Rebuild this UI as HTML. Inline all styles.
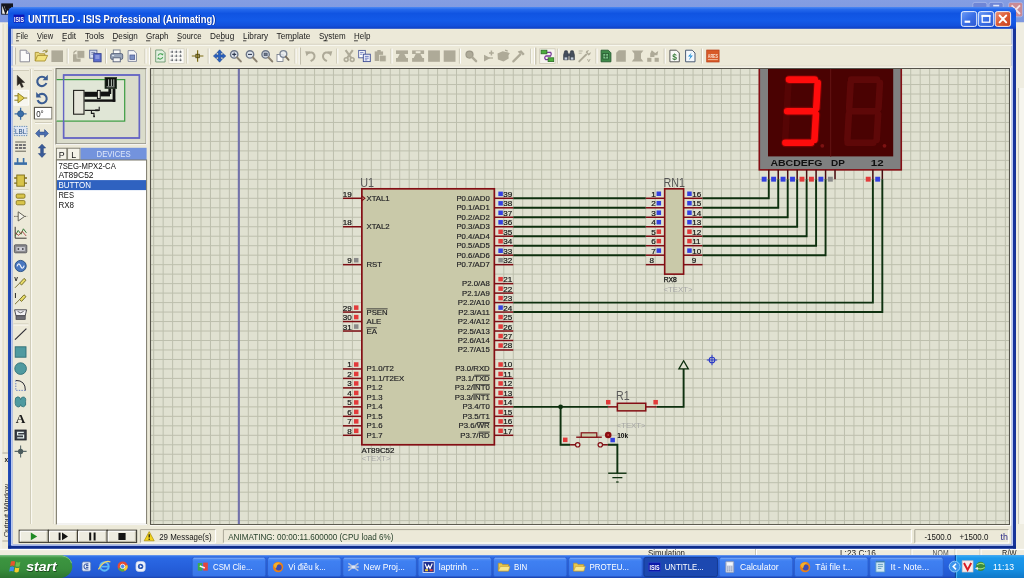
<!DOCTYPE html>
<html><head><meta charset="utf-8"><title>UNTITLED - ISIS Professional (Animating)</title>
<style>
html,body{margin:0;padding:0;background:#ece9d8;overflow:hidden;}
svg{display:block;font-family:"Liberation Sans",sans-serif;}
text{white-space:pre;}
</style></head><body>
<svg width="1024" height="578" viewBox="0 0 1024 578">
<defs>
<filter id="soft" filterUnits="userSpaceOnUse" x="-12" y="-12" width="1048" height="602" color-interpolation-filters="sRGB"><feGaussianBlur stdDeviation="0.42"/></filter>
<linearGradient id="gInact" x1="0" y1="0" x2="0" y2="1">
<stop offset="0" stop-color="#a3b7ec"/><stop offset="0.18" stop-color="#879fe3"/><stop offset="1" stop-color="#7c97df"/></linearGradient>
<linearGradient id="gTitle" x1="0" y1="0" x2="0" y2="1">
<stop offset="0" stop-color="#4f8af3"/><stop offset="0.12" stop-color="#2468ec"/><stop offset="0.30" stop-color="#1054e2"/>
<stop offset="0.62" stop-color="#135ae8"/><stop offset="0.86" stop-color="#1250dc"/><stop offset="1" stop-color="#0f3fc0"/></linearGradient>
<linearGradient id="gBtnB" x1="0" y1="0" x2="1" y2="1"><stop offset="0" stop-color="#6f9cf6"/><stop offset="0.5" stop-color="#3a6fe6"/><stop offset="1" stop-color="#2c58d2"/></linearGradient>
<linearGradient id="gBtnR" x1="0" y1="0" x2="1" y2="1"><stop offset="0" stop-color="#eb9378"/><stop offset="0.5" stop-color="#dc5a34"/><stop offset="1" stop-color="#c4401e"/></linearGradient>
<linearGradient id="gTask" x1="0" y1="0" x2="0" y2="1">
<stop offset="0" stop-color="#3f7ff0"/><stop offset="0.12" stop-color="#2a68e4"/><stop offset="0.5" stop-color="#2660dc"/><stop offset="0.9" stop-color="#2258d0"/><stop offset="1" stop-color="#1c46b4"/></linearGradient>
<linearGradient id="gStart" x1="0" y1="0" x2="0" y2="1">
<stop offset="0" stop-color="#5aa85a"/><stop offset="0.15" stop-color="#3c9440"/><stop offset="0.6" stop-color="#388e3c"/><stop offset="1" stop-color="#2c7430"/></linearGradient>
<linearGradient id="gTray" x1="0" y1="0" x2="0" y2="1">
<stop offset="0" stop-color="#3cb0f4"/><stop offset="0.12" stop-color="#1c98ec"/><stop offset="0.6" stop-color="#1690e4"/><stop offset="1" stop-color="#1078c8"/></linearGradient>
<linearGradient id="gTbtn" x1="0" y1="0" x2="0" y2="1">
<stop offset="0" stop-color="#5c96f6"/><stop offset="0.2" stop-color="#3f80f2"/><stop offset="1" stop-color="#3876ea"/></linearGradient>
</defs>
<g filter="url(#soft)">
<rect x="-12.00" y="-12.00" width="1048.00" height="602.00" fill="#ece9d8" />
<rect x="-12.00" y="-12.00" width="1048.00" height="34.50" fill="url(#gInact)" />
<rect x="-12.00" y="22.50" width="14.40" height="533.00" fill="#f1f0ea" />
<rect x="2.40" y="22.50" width="6.00" height="533.00" fill="#efecdc" />
<line x1="3.20" y1="24.00" x2="3.20" y2="452.00" stroke="#dcd8c4" stroke-width="0.8" />
<line x1="7.20" y1="24.00" x2="7.20" y2="452.00" stroke="#e2dfc6" stroke-width="1.2" />
<rect x="1.20" y="3.40" width="11.80" height="11.20" fill="#16161c" />
<path d="M2.2 6.2 L4.4 6.2 L6.4 12.4 L8.2 8.2 L9.6 12.4 L11.8 5.2 L12.4 13.8 L2.2 13.8 Z" fill="#f2f2ec"/>
<path d="M3 5.4 L5.6 12.8 L7.6 7.8 L9.2 12.6 L11.6 5" fill="none" stroke="#16161c" stroke-width="1.5"/>
<rect x="972.80" y="2.40" width="14.20" height="14.40" fill="#6f86d6" stroke="#a9b9ea" stroke-width="0.8" rx="2"/>
<rect x="989.00" y="2.40" width="14.20" height="14.40" fill="#6f86d6" stroke="#a9b9ea" stroke-width="0.8" rx="2"/>
<rect x="1008.60" y="2.40" width="14.00" height="14.40" fill="#c98a94" stroke="#a9b9ea" stroke-width="0.8" rx="2"/>
<path d="M1011.6 5.4 l8.4 8.6 M1020 5.4 l-8.4 8.6" stroke="#f1e2e6" stroke-width="1.9" fill="none"/>
<path d="M993.2 5.6 h6" stroke="#dfe6fa" stroke-width="1.6"/>
<rect x="1016.00" y="22.50" width="20.00" height="533.00" fill="#efede1" />
<line x1="1018.60" y1="88.00" x2="1018.60" y2="524.00" stroke="#c4c2b8" stroke-width="1.0" />
<rect x="1019.30" y="88.00" width="16.70" height="436.00" fill="#f6f5ee" />
<line x1="2.40" y1="453.00" x2="8.00" y2="453.00" stroke="#aca899" stroke-width="1" />
<text x="0.00" y="0.00" font-family='"Liberation Sans", sans-serif' font-size="7.2" fill="#2a2a2a" textLength="53.00" lengthAdjust="spacingAndGlyphs" transform="translate(8.6,537) rotate(-90)">Output Window</text>
<text x="4.60" y="462.40" font-family='"Liberation Sans", sans-serif' font-size="6.6" fill="#222" font-weight="bold" >x</text>
<line x1="2.40" y1="541.00" x2="8.00" y2="541.00" stroke="#aca899" stroke-width="1" />
<rect x="-12.00" y="548.50" width="1048.00" height="7.00" fill="#efecdd" />
<rect x="-12.00" y="548.80" width="1048.00" height="1.30" fill="#fdfdfa" />
<line x1="755.50" y1="549.00" x2="755.50" y2="555.00" stroke="#c9c5b2" stroke-width="1" />
<line x1="756.50" y1="549.00" x2="756.50" y2="555.00" stroke="#ffffff" stroke-width="1" />
<line x1="911.00" y1="549.00" x2="911.00" y2="555.00" stroke="#c9c5b2" stroke-width="1" />
<line x1="912.00" y1="549.00" x2="912.00" y2="555.00" stroke="#ffffff" stroke-width="1" />
<line x1="955.00" y1="549.00" x2="955.00" y2="555.00" stroke="#c9c5b2" stroke-width="1" />
<line x1="956.00" y1="549.00" x2="956.00" y2="555.00" stroke="#ffffff" stroke-width="1" />
<line x1="980.00" y1="549.00" x2="980.00" y2="555.00" stroke="#c9c5b2" stroke-width="1" />
<line x1="981.00" y1="549.00" x2="981.00" y2="555.00" stroke="#ffffff" stroke-width="1" />
<clipPath id="cpBack"><rect x="0" y="548.6" width="1024" height="6.6"/></clipPath>
<g clip-path="url(#cpBack)">
<text x="648.00" y="556.30" font-family='"Liberation Sans", sans-serif' font-size="8.6" fill="#222" textLength="37.00" lengthAdjust="spacingAndGlyphs" >Simulation</text>
<text x="840.00" y="556.30" font-family='"Liberation Sans", sans-serif' font-size="8.6" fill="#222" textLength="36.00" lengthAdjust="spacingAndGlyphs" >L:23 C:16</text>
<text x="932.60" y="556.30" font-family='"Liberation Sans", sans-serif' font-size="8.6" fill="#555" textLength="16.00" lengthAdjust="spacingAndGlyphs" >NOM</text>
<text x="1002.00" y="556.30" font-family='"Liberation Sans", sans-serif' font-size="8.6" fill="#222" textLength="14.50" lengthAdjust="spacingAndGlyphs" >R/W</text>
</g>
<path d="M8.2 548.6 V12.9 Q8.2 6.9 14.2 6.9 H1010 Q1016 6.9 1016 12.9 V548.6 Z" fill="#1a48d2"/>
<path d="M8.2 28.8 V12.9 Q8.2 6.9 14.2 6.9 H1010 Q1016 6.9 1016 12.9 V28.8 Z" fill="url(#gTitle)"/>
<rect x="8.20" y="28.80" width="3.00" height="519.80" fill="#1c46b0" />
<rect x="11.20" y="28.80" width="1.30" height="516.20" fill="#e2e8fb" />
<rect x="1013.00" y="28.80" width="3.00" height="519.80" fill="#18349a" />
<rect x="1011.70" y="28.80" width="1.30" height="516.20" fill="#b9c8f6" />
<rect x="8.20" y="545.70" width="1007.80" height="2.90" fill="#0e2c8c" />
<rect x="11.20" y="544.50" width="1001.80" height="1.20" fill="#dfe5fb" />
<rect x="12.50" y="28.80" width="999.20" height="515.70" fill="#ece9d8" />
<rect x="13.60" y="14.60" width="10.80" height="8.00" fill="#0c18b8" />
<text x="14.10" y="21.60" font-family='"Liberation Sans", sans-serif' font-size="7.2" fill="#ffffff" font-weight="bold" textLength="9.80" lengthAdjust="spacingAndGlyphs" >ISIS</text>
<text x="28.80" y="23.40" font-family='"Liberation Sans", sans-serif' font-size="10.6" fill="#0a2a90" font-weight="bold" textLength="187.40" lengthAdjust="spacingAndGlyphs" >UNTITLED - ISIS Professional (Animating)</text>
<text x="28.00" y="22.80" font-family='"Liberation Sans", sans-serif' font-size="10.6" fill="#ffffff" font-weight="bold" textLength="187.40" lengthAdjust="spacingAndGlyphs" >UNTITLED - ISIS Professional (Animating)</text>
<rect x="961.30" y="11.60" width="15.40" height="14.80" fill="url(#gBtnB)" stroke="#ffffff" stroke-width="0.9" rx="2.2"/>
<rect x="978.30" y="11.60" width="15.40" height="14.80" fill="url(#gBtnB)" stroke="#ffffff" stroke-width="0.9" rx="2.2"/>
<rect x="995.20" y="11.60" width="15.40" height="14.80" fill="url(#gBtnR)" stroke="#ffffff" stroke-width="0.9" rx="2.2"/>
<path d="M964.6 21.7 h5.6" stroke="#fff" stroke-width="2.2" fill="none"/>
<rect x="982.2" y="15.6" width="7.6" height="6.6" fill="none" stroke="#fff" stroke-width="1.3"/><path d="M981.6 15.9 h8.8" stroke="#fff" stroke-width="2"/>
<path d="M999.6 15.5 l6.6 6.8 M1006.2 15.5 l-6.6 6.8" stroke="#fff" stroke-width="1.9" fill="none" stroke-linecap="round"/>
<text x="16.00" y="39.30" font-family='"Liberation Sans", sans-serif' font-size="8.4" fill="#1a1a1a" textLength="12.20" lengthAdjust="spacingAndGlyphs" >File</text>
<text x="37.00" y="39.30" font-family='"Liberation Sans", sans-serif' font-size="8.4" fill="#1a1a1a" textLength="16.20" lengthAdjust="spacingAndGlyphs" >View</text>
<text x="62.00" y="39.30" font-family='"Liberation Sans", sans-serif' font-size="8.4" fill="#1a1a1a" textLength="14.00" lengthAdjust="spacingAndGlyphs" >Edit</text>
<text x="85.00" y="39.30" font-family='"Liberation Sans", sans-serif' font-size="8.4" fill="#1a1a1a" textLength="19.20" lengthAdjust="spacingAndGlyphs" >Tools</text>
<text x="112.50" y="39.30" font-family='"Liberation Sans", sans-serif' font-size="8.4" fill="#1a1a1a" textLength="25.30" lengthAdjust="spacingAndGlyphs" >Design</text>
<text x="146.00" y="39.30" font-family='"Liberation Sans", sans-serif' font-size="8.4" fill="#1a1a1a" textLength="22.60" lengthAdjust="spacingAndGlyphs" >Graph</text>
<text x="177.00" y="39.30" font-family='"Liberation Sans", sans-serif' font-size="8.4" fill="#1a1a1a" textLength="24.60" lengthAdjust="spacingAndGlyphs" >Source</text>
<text x="210.00" y="39.30" font-family='"Liberation Sans", sans-serif' font-size="8.4" fill="#1a1a1a" textLength="24.20" lengthAdjust="spacingAndGlyphs" >Debug</text>
<text x="243.00" y="39.30" font-family='"Liberation Sans", sans-serif' font-size="8.4" fill="#1a1a1a" textLength="25.00" lengthAdjust="spacingAndGlyphs" >Library</text>
<text x="276.50" y="39.30" font-family='"Liberation Sans", sans-serif' font-size="8.4" fill="#1a1a1a" textLength="33.90" lengthAdjust="spacingAndGlyphs" >Template</text>
<text x="319.00" y="39.30" font-family='"Liberation Sans", sans-serif' font-size="8.4" fill="#1a1a1a" textLength="26.60" lengthAdjust="spacingAndGlyphs" >System</text>
<text x="354.00" y="39.30" font-family='"Liberation Sans", sans-serif' font-size="8.4" fill="#1a1a1a" textLength="16.40" lengthAdjust="spacingAndGlyphs" >Help</text>
<line x1="16.00" y1="40.80" x2="18.90" y2="40.80" stroke="#1a1a1a" stroke-width="0.8" />
<line x1="37.00" y1="40.80" x2="40.85" y2="40.80" stroke="#1a1a1a" stroke-width="0.8" />
<line x1="62.00" y1="40.80" x2="65.33" y2="40.80" stroke="#1a1a1a" stroke-width="0.8" />
<line x1="85.00" y1="40.80" x2="88.65" y2="40.80" stroke="#1a1a1a" stroke-width="0.8" />
<line x1="112.50" y1="40.80" x2="116.51" y2="40.80" stroke="#1a1a1a" stroke-width="0.8" />
<line x1="146.00" y1="40.80" x2="150.29" y2="40.80" stroke="#1a1a1a" stroke-width="0.8" />
<line x1="177.00" y1="40.80" x2="180.90" y2="40.80" stroke="#1a1a1a" stroke-width="0.8" />
<line x1="219.68" y1="40.80" x2="224.28" y2="40.80" stroke="#1a1a1a" stroke-width="0.8" />
<line x1="243.00" y1="40.80" x2="246.39" y2="40.80" stroke="#1a1a1a" stroke-width="0.8" />
<line x1="289.21" y1="40.80" x2="293.24" y2="40.80" stroke="#1a1a1a" stroke-width="0.8" />
<line x1="323.43" y1="40.80" x2="327.64" y2="40.80" stroke="#1a1a1a" stroke-width="0.8" />
<line x1="354.00" y1="40.80" x2="357.89" y2="40.80" stroke="#1a1a1a" stroke-width="0.8" />
<line x1="11.20" y1="44.30" x2="1012.20" y2="44.30" stroke="#d2cebc" stroke-width="1" />
<line x1="11.20" y1="45.30" x2="1012.20" y2="45.30" stroke="#fbfaf4" stroke-width="1" />
<line x1="11.20" y1="66.20" x2="1012.20" y2="66.20" stroke="#d8d4c2" stroke-width="1" />
<line x1="11.20" y1="67.00" x2="1012.20" y2="67.00" stroke="#f8f7f0" stroke-width="1" />
<line x1="14.20" y1="47.60" x2="14.20" y2="64.60" stroke="#ffffff" stroke-width="1" />
<line x1="15.40" y1="47.60" x2="15.40" y2="64.60" stroke="#bcb8a6" stroke-width="1" />
<g transform="translate(24.70,56.00)">
<path d="M-4.6 -5.8 H1.6 L4.8 -2.6 V5.8 H-4.6 Z" fill="#fbfbfb" stroke="#8c8c98" stroke-width="1"/>
<path d="M1.6 -5.8 V-2.6 H4.8" fill="#dcdce4" stroke="#8c8c98" stroke-width="0.8"/>
</g>
<g transform="translate(41.20,56.00)">
<path d="M-6 5 V-3.6 H-2.6 L-1.4 -2.2 H3.6 V0" fill="#e8d87a" stroke="#a89030" stroke-width="0.9"/>
<path d="M-6 5 L-3.6 -0.6 H6.4 L3.8 5 Z" fill="#f2e27c" stroke="#a89030" stroke-width="0.9"/>
<path d="M1.4 -4.6 Q3.6 -6.6 5.6 -4.4 M5.8 -6.4 V-4 H3.6" fill="none" stroke="#8a7a20" stroke-width="0.9"/>
</g>
<rect x="51.40" y="50.40" width="11.60" height="11.60" fill="#aeaa98" />
<line x1="67.20" y1="48.60" x2="67.20" y2="63.60" stroke="#c9c5b2" stroke-width="1" />
<line x1="68.20" y1="48.60" x2="68.20" y2="63.60" stroke="#ffffff" stroke-width="1" />
<g transform="translate(78.80,56.00)">
<rect x="-5.8" y="-1.8" width="7.6" height="7.6" fill="#aeaa98"/><rect x="-1.8" y="-5.6" width="7.8" height="7.8" fill="#aeaa98" stroke="#ece9d8" stroke-width="0.7"/>
<path d="M-5.2 -2.4 Q-4.6 -5.2 -2.2 -5.2" fill="none" stroke="#aeaa98" stroke-width="1.2"/>
</g>
<g transform="translate(95.30,56.00)">
<rect x="-5.6" y="-5.8" width="7.2" height="8" fill="#dfe3f2" stroke="#5a6a9a" stroke-width="0.9"/>
<rect x="-1.6" y="-2.4" width="7.4" height="8.2" fill="#5a6ccc" stroke="#3a4690" stroke-width="0.9"/>
<path d="M-4 -3.6 h4 M-4 -1.8 h2" stroke="#5a6a9a" stroke-width="0.8"/><path d="M0 0 h4.2 M0 2 h4.2" stroke="#c8d0f4" stroke-width="0.9"/>
</g>
<line x1="105.60" y1="48.60" x2="105.60" y2="63.60" stroke="#c9c5b2" stroke-width="1" />
<line x1="106.60" y1="48.60" x2="106.60" y2="63.60" stroke="#ffffff" stroke-width="1" />
<g transform="translate(116.70,56.00)">
<rect x="-3.4" y="-6" width="6.8" height="4.4" fill="#fafafa" stroke="#6a7486" stroke-width="0.9"/>
<rect x="-6" y="-2.4" width="12" height="5.8" rx="1.4" fill="#9aa6ba" stroke="#56607a" stroke-width="0.9"/>
<rect x="-3.6" y="1.8" width="7.2" height="4" fill="#f4f4f4" stroke="#56607a" stroke-width="0.9"/>
<path d="M-4.6 -0.4 h2" stroke="#e8eef8" stroke-width="1"/>
</g>
<g transform="translate(132.30,56.00)">
<path d="M-4.2 -5.4 H1.6 L4.2 -2.8 V5.4 H-4.2 Z" fill="#f6f6f8" stroke="#7a8298" stroke-width="0.9"/>
<rect x="-2.4" y="-1" width="4.8" height="4.4" fill="#7c90c4" stroke="#46548a" stroke-width="0.7"/>
</g>
<line x1="145.00" y1="48.60" x2="145.00" y2="63.60" stroke="#c9c5b2" stroke-width="1" />
<line x1="146.00" y1="48.60" x2="146.00" y2="63.60" stroke="#ffffff" stroke-width="1" />
<line x1="149.40" y1="47.60" x2="149.40" y2="64.60" stroke="#ffffff" stroke-width="1" />
<line x1="150.60" y1="47.60" x2="150.60" y2="64.60" stroke="#bcb8a6" stroke-width="1" />
<g transform="translate(160.30,56.00)">
<path d="M-4.6 -6 H2 L4.8 -3.2 V6 H-4.6 Z" fill="#e2efe0" stroke="#6b966f" stroke-width="0.9"/>
<path d="M-2.2 -0.4 A2.6 2.6 0 0 1 2.4 -1.2 M2.4 1.2 A2.6 2.6 0 0 1 -2.2 2" fill="none" stroke="#46a352" stroke-width="1.1"/>
<path d="M3.2 -2.8 L2.6 -0.6 L0.8 -1.6 Z M-3 3.6 L-2.4 1.2 L-0.6 2.2 Z" fill="#46a352"/>
</g>
<rect x="168.90" y="48.80" width="15.20" height="14.60" fill="#fbfaf6" stroke="#d6d2c2" stroke-width="0.8" />
<rect x="171.45" y="51.25" width="1.5" height="1.5" fill="#343840"/>
<rect x="171.45" y="55.35" width="1.5" height="1.5" fill="#343840"/>
<rect x="171.45" y="59.45" width="1.5" height="1.5" fill="#343840"/>
<rect x="175.60" y="51.25" width="1.5" height="1.5" fill="#343840"/>
<rect x="175.60" y="55.35" width="1.5" height="1.5" fill="#343840"/>
<rect x="175.60" y="59.45" width="1.5" height="1.5" fill="#343840"/>
<rect x="179.75" y="51.25" width="1.5" height="1.5" fill="#343840"/>
<rect x="179.75" y="55.35" width="1.5" height="1.5" fill="#343840"/>
<rect x="179.75" y="59.45" width="1.5" height="1.5" fill="#343840"/>
<path d="M172.20 49.80 v12.6 M176.35 49.80 v12.6 M180.50 49.80 v12.6 M170.10 52.00 h12.6 M170.10 56.10 h12.6 M170.10 60.20 h12.6" stroke="#8a8e96" stroke-width="0.6" stroke-dasharray="1 1.1" fill="none"/>
<line x1="186.80" y1="48.60" x2="186.80" y2="63.60" stroke="#c9c5b2" stroke-width="1" />
<line x1="187.80" y1="48.60" x2="187.80" y2="63.60" stroke="#ffffff" stroke-width="1" />
<g transform="translate(197.60,56.00)">
<path d="M-5.8 0 H5.8 M0 -5.8 V5.8" stroke="#7a6a10" stroke-width="1.15"/><rect x="-1.7" y="-1.7" width="3.4" height="3.4" fill="none" stroke="#4c4408" stroke-width="0.9"/>
</g>
<line x1="208.20" y1="48.60" x2="208.20" y2="63.60" stroke="#c9c5b2" stroke-width="1" />
<line x1="209.20" y1="48.60" x2="209.20" y2="63.60" stroke="#ffffff" stroke-width="1" />
<g transform="translate(219.60,56.00)">
<path d="M0 -6.2 L2.6 -3.2 H1.1 V-1.1 H3.2 V-2.6 L6.2 0 L3.2 2.6 V1.1 H1.1 V3.2 H2.6 L0 6.2 L-2.6 3.2 H-1.1 V1.1 H-3.2 V2.6 L-6.2 0 L-3.2 -2.6 V-1.1 H-1.1 V-3.2 H-2.6 Z" fill="#2a62c0" stroke="#173f8c" stroke-width="0.6"/>
</g>
<g transform="translate(235.40,56.00)">
<circle cx="-1.2" cy="-1.6" r="3.7" fill="#dfe5ee" stroke="#6c7688" stroke-width="1.4"/>
<path d="M1.6 1.4 L5.4 5.4" stroke="#8a8070" stroke-width="2.1" stroke-linecap="round"/>
<path d="M-3.2 -1.6 h4 M-1.2 -3.6 v4" stroke="#303a50" stroke-width="1.1"/>
</g>
<g transform="translate(251.20,56.00)">
<circle cx="-1.2" cy="-1.6" r="3.7" fill="#dfe5ee" stroke="#6c7688" stroke-width="1.4"/>
<path d="M1.6 1.4 L5.4 5.4" stroke="#8a8070" stroke-width="2.1" stroke-linecap="round"/>
<path d="M-3.2 -1.6 h4" stroke="#303a50" stroke-width="1.1"/>
</g>
<g transform="translate(266.80,56.00)">
<circle cx="-1.2" cy="-1.6" r="3.7" fill="#dfe5ee" stroke="#6c7688" stroke-width="1.4"/>
<path d="M1.6 1.4 L5.4 5.4" stroke="#8a8070" stroke-width="2.1" stroke-linecap="round"/>
<rect x="-2.8" y="-3" width="3.2" height="2.8" fill="#6a7488" stroke="#404a5c" stroke-width="0.6"/>
</g>
<g transform="translate(282.80,56.00)">
<rect x="-5.8" y="-1.6" width="6" height="7" fill="#fcfcfc" stroke="#707888" stroke-width="0.8"/>
<circle cx="0.6" cy="-2" r="3.4" fill="#e8ecf2" fill-opacity="0.8" stroke="#7a8494" stroke-width="1.3"/>
<path d="M3 0.6 L5.8 3.8" stroke="#7a7060" stroke-width="1.8" stroke-linecap="round"/>
</g>
<line x1="295.00" y1="48.60" x2="295.00" y2="63.60" stroke="#c9c5b2" stroke-width="1" />
<line x1="296.00" y1="48.60" x2="296.00" y2="63.60" stroke="#ffffff" stroke-width="1" />
<line x1="299.20" y1="47.60" x2="299.20" y2="64.60" stroke="#ffffff" stroke-width="1" />
<line x1="300.40" y1="47.60" x2="300.40" y2="64.60" stroke="#bcb8a6" stroke-width="1" />
<g transform="translate(311.00,56.00) scale(1,1)">
<path d="M-3.8 -2.6 Q1.8 -5.2 3.4 -0.8 Q4.2 2.8 -0.4 5.2" fill="none" stroke="#aeaa98" stroke-width="2"/>
<path d="M-5.8 -4.8 L-0.8 -4.4 L-4.4 0.2 Z" fill="#aeaa98"/>
</g>
<g transform="translate(326.50,56.00) scale(-1,1)">
<path d="M-3.8 -2.6 Q1.8 -5.2 3.4 -0.8 Q4.2 2.8 -0.4 5.2" fill="none" stroke="#aeaa98" stroke-width="2"/>
<path d="M-5.8 -4.8 L-0.8 -4.4 L-4.4 0.2 Z" fill="#aeaa98"/>
</g>
<line x1="336.80" y1="48.60" x2="336.80" y2="63.60" stroke="#c9c5b2" stroke-width="1" />
<line x1="337.80" y1="48.60" x2="337.80" y2="63.60" stroke="#ffffff" stroke-width="1" />
<g transform="translate(349.20,56.00)">
<path d="M-3.6 -5.8 L2.2 2.2 M3.6 -5.8 L-2.2 2.2" stroke="#aeaa98" stroke-width="2.1" fill="none"/>
<circle cx="-3" cy="3.6" r="1.9" fill="none" stroke="#aeaa98" stroke-width="1.6"/><circle cx="3" cy="3.6" r="1.9" fill="none" stroke="#aeaa98" stroke-width="1.6"/>
</g>
<g transform="translate(364.70,56.00)">
<rect x="-6" y="-5.6" width="6.6" height="7.4" fill="#fdfdfd" stroke="#4a5a9a" stroke-width="0.9"/>
<rect x="-1.4" y="-1.8" width="7" height="7.4" fill="#eef0fa" stroke="#3c4c94" stroke-width="0.9"/>
<path d="M-4.6 -3.6 h3.4 M-4.6 -1.8 h2.2 M0.2 0.4 h3.8 M0.2 2.2 h3.8 M0.2 3.9 h2.4" stroke="#5466b4" stroke-width="0.8"/>
</g>
<g transform="translate(380.30,56.00)">
<rect x="-5.6" y="-4.6" width="8.4" height="9.6" fill="#aeaa98"/><rect x="-3" y="-6" width="3.4" height="2" fill="#aeaa98"/>
<rect x="-0.8" y="-0.8" width="6.6" height="6.6" fill="#aeaa98" stroke="#ece9d8" stroke-width="0.7"/>
</g>
<line x1="391.00" y1="48.60" x2="391.00" y2="63.60" stroke="#c9c5b2" stroke-width="1" />
<line x1="392.00" y1="48.60" x2="392.00" y2="63.60" stroke="#ffffff" stroke-width="1" />
<g transform="translate(402.00,56.00)">
<rect x="-6" y="-5.6" width="12" height="3.6" fill="#aeaa98"/><rect x="-6" y="2" width="12" height="3.8" fill="#aeaa98"/><path d="M-2.4 -2 H2.4 L4.4 2 H-4.4 Z" fill="#aeaa98"/>
</g>
<g transform="translate(418.10,56.00)">
<rect x="-6" y="-5.6" width="12" height="3.6" fill="#aeaa98"/><rect x="-6" y="2" width="12" height="3.8" fill="#aeaa98"/><path d="M-2.4 -2 H2.4 L4.4 2 H-4.4 Z" fill="#aeaa98"/>
<rect x="-2.4" y="-4.8" width="4.8" height="2" fill="#ece9d8"/>
</g>
<g transform="translate(434.00,56.00)">
<rect x="-5.9" y="-5.6" width="11.8" height="11.4" fill="#aeaa98"/>
</g>
<g transform="translate(449.60,56.00)">
<rect x="-5.9" y="-5.6" width="11.8" height="11.4" fill="#aeaa98"/>
</g>
<line x1="459.40" y1="48.60" x2="459.40" y2="63.60" stroke="#c9c5b2" stroke-width="1" />
<line x1="460.40" y1="48.60" x2="460.40" y2="63.60" stroke="#ffffff" stroke-width="1" />
<g transform="translate(470.90,56.00)">
<circle cx="-1.4" cy="-1.4" r="3.5" fill="#aeaa98" stroke="#9c9888" stroke-width="1.2"/><path d="M1.4 1.4 L5.2 5.2" stroke="#aeaa98" stroke-width="2.4" stroke-linecap="round"/>
</g>
<g transform="translate(489.00,56.00)">
<path d="M-5 -1.2 L1.4 2 L-5 5.6 Z" fill="#aeaa98"/><path d="M0 2 h4" stroke="#aeaa98" stroke-width="1.2"/><path d="M2.4 -5.6 v5 M0 -3.1 h4.8" stroke="#aeaa98" stroke-width="1.5"/>
</g>
<g transform="translate(503.10,56.00)">
<path d="M-5.6 -2.4 L-0.4 -4.8 L5.2 -3.4 L5.6 2.6 L0.4 5.4 L-5.2 3.6 Z" fill="#aeaa98"/><path d="M2 -5.8 l2.6 1 M4.4 -1 l1.8 -2" stroke="#aeaa98" stroke-width="1.4"/>
</g>
<g transform="translate(518.70,56.00)">
<path d="M-5.4 5.4 L1.6 -1.6" stroke="#aeaa98" stroke-width="2.2" stroke-linecap="round"/><path d="M-1 -4.6 L2.6 -5.8 L6 -2 L4.2 -0.4 L2.4 -2.6 L0.6 -2.4 Z" fill="#aeaa98"/>
</g>
<line x1="530.80" y1="48.60" x2="530.80" y2="63.60" stroke="#c9c5b2" stroke-width="1" />
<line x1="531.80" y1="48.60" x2="531.80" y2="63.60" stroke="#ffffff" stroke-width="1" />
<line x1="534.60" y1="47.60" x2="534.60" y2="64.60" stroke="#ffffff" stroke-width="1" />
<line x1="535.80" y1="47.60" x2="535.80" y2="64.60" stroke="#bcb8a6" stroke-width="1" />
<rect x="539.70" y="48.80" width="15.40" height="14.60" fill="#f6f5ee" stroke="#cfcab8" stroke-width="0.8" />
<g transform="translate(547.30,56.00)">
<path d="M-3 -3.6 H3.4 Q4.8 -1.8 3.2 0 H-1.4 Q-3.6 1.6 -1.6 3.6 H2" fill="none" stroke="#7a3a9a" stroke-width="1.3"/>
<rect x="-6.2" y="-5.8" width="5.8" height="3.6" fill="#4cae3c" stroke="#2c6e24" stroke-width="0.8"/><rect x="0.8" y="1.8" width="5.6" height="3.8" fill="#4cae3c" stroke="#2c6e24" stroke-width="0.8"/>
</g>
<line x1="557.80" y1="48.60" x2="557.80" y2="63.60" stroke="#c9c5b2" stroke-width="1" />
<line x1="558.80" y1="48.60" x2="558.80" y2="63.60" stroke="#ffffff" stroke-width="1" />
<g transform="translate(569.00,56.00)">
<path d="M-4.2 -5.2 h2.4 l1 3.4 v5.6 h-4.6 v-5 Z M4.2 -5.2 h-2.4 l-1 3.4 v5.6 h4.6 v-5 Z" fill="#454e5c" stroke="#2a303c" stroke-width="0.6"/>
<rect x="-1" y="-2.4" width="2" height="2.6" fill="#454e5c"/><rect x="-4.4" y="1.4" width="2.6" height="2.2" fill="#c6d0de"/><rect x="1.8" y="1.4" width="2.6" height="2.2" fill="#c6d0de"/>
</g>
<g transform="translate(584.70,56.00)">
<path d="M-5.4 5.4 L1.4 -1.4" stroke="#aeaa98" stroke-width="2" stroke-linecap="round"/><path d="M1 -3.8 Q1.6 -6.2 4.4 -5.8 L2.8 -3.8 L4 -2.4 L6 -4 Q6.2 -1 3.6 -0.6 Z" fill="#aeaa98"/>
<path d="M-6 -5 h4 M-6 -2.8 h3 M2.8 3 l1.2 2.8 l1.4 -2.8" stroke="#aeaa98" stroke-width="0.9" fill="none"/>
</g>
<line x1="596.00" y1="48.60" x2="596.00" y2="63.60" stroke="#c9c5b2" stroke-width="1" />
<line x1="597.00" y1="48.60" x2="597.00" y2="63.60" stroke="#ffffff" stroke-width="1" />
<g transform="translate(605.90,56.00)">
<path d="M-4.8 -5.8 H2.4 L5 -3.2 V5.8 H-4.8 Z" fill="#3f8a4a" stroke="#245a30" stroke-width="0.9"/>
<rect x="-3" y="-2.6" width="5.6" height="5.6" fill="#7cc488" stroke="#1c4a26" stroke-width="0.7"/><path d="M-2.4 0.2 h4.4 M-0.2 -2 v4.4" stroke="#1c4a26" stroke-width="0.7"/>
</g>
<g transform="translate(621.00,56.00)">
<path d="M-4.8 -3.2 L-2.2 -5.8 H4.8 V5.8 H-4.8 Z" fill="#aeaa98"/>
</g>
<g transform="translate(637.60,56.00)">
<path d="M-5.8 -5.4 H5.8 L3.4 -2.6 V2.6 L5.8 5.6 H-5.8 L-3.4 2.6 V-2.6 Z" fill="#aeaa98"/>
</g>
<g transform="translate(653.00,56.00)">
<path d="M-1.2 -5.8 L2.2 -3 L5.2 -5 L4.4 -0.8 H1.4 V1 H-2.8 V-2.6 Z" fill="#aeaa98"/><rect x="-5.8" y="1.8" width="4.2" height="4" fill="#aeaa98"/><rect x="1.6" y="1.8" width="4.2" height="4" fill="#aeaa98"/>
</g>
<line x1="664.20" y1="48.60" x2="664.20" y2="63.60" stroke="#c9c5b2" stroke-width="1" />
<line x1="665.20" y1="48.60" x2="665.20" y2="63.60" stroke="#ffffff" stroke-width="1" />
<g transform="translate(674.50,56.00)">
<path d="M-4.6 -5.8 H2 L4.8 -3 V5.8 H-4.6 Z" fill="#f8f8f6" stroke="#5c5c5c" stroke-width="1"/>
<text x="0.00" y="3.60" font-family='"Liberation Sans", sans-serif' font-size="8.4" fill="#3c7c3c" text-anchor="middle" font-weight="bold" >$</text>
</g>
<g transform="translate(690.20,56.00)">
<path d="M-4.6 -5.8 H2 L4.8 -3 V5.8 H-4.6 Z" fill="#f4f8fc" stroke="#4c5c74" stroke-width="1"/>
<path d="M1.6 -3.4 L-2.2 0.6 H0.4 L-1.6 4.4 L2.6 -0.4 H0 Z" fill="#1e8ed8"/>
</g>
<line x1="701.40" y1="48.60" x2="701.40" y2="63.60" stroke="#c9c5b2" stroke-width="1" />
<line x1="702.40" y1="48.60" x2="702.40" y2="63.60" stroke="#ffffff" stroke-width="1" />
<rect x="706.70" y="50.00" width="12.40" height="12.00" fill="#d85a28" stroke="#b8401a" stroke-width="0.7" />
<text x="712.90" y="57.60" font-family='"Liberation Sans", sans-serif' font-size="5.4" fill="#fbe4d4" text-anchor="middle" font-weight="bold" textLength="10.40" lengthAdjust="spacingAndGlyphs" >ARES</text>
<line x1="707.90" y1="59.60" x2="717.90" y2="59.60" stroke="#f4c4a8" stroke-width="0.9" />
<line x1="30.60" y1="69.00" x2="30.60" y2="524.00" stroke="#cdc9b6" stroke-width="1" />
<line x1="31.60" y1="69.00" x2="31.60" y2="524.00" stroke="#fbfaf4" stroke-width="1" />
<line x1="53.40" y1="69.00" x2="53.40" y2="524.00" stroke="#d8d4c4" stroke-width="1" />
<line x1="54.40" y1="69.00" x2="54.40" y2="524.00" stroke="#f8f7f0" stroke-width="1" />
<line x1="13.00" y1="69.20" x2="29.00" y2="69.20" stroke="#fbfaf4" stroke-width="1" />
<line x1="13.00" y1="70.40" x2="29.00" y2="70.40" stroke="#cdc9b6" stroke-width="1" />
<line x1="34.00" y1="69.20" x2="52.00" y2="69.20" stroke="#fbfaf4" stroke-width="1" />
<line x1="34.00" y1="70.40" x2="52.00" y2="70.40" stroke="#cdc9b6" stroke-width="1" />
<g transform="translate(20.60,81.40)">
<path d="M-3.4 -6.2 L-3.4 4.2 L-0.9 2 L1 6.2 L2.8 5.4 L0.9 1.3 L4.2 1.1 Z" fill="#2a2620" stroke="#2a2620" stroke-width="0.4"/></g>
<rect x="13.80" y="90.20" width="14.60" height="15.00" fill="#f7f6ee" stroke="#ffffff" stroke-width="0.8" />
<g transform="translate(20.60,98.00)">
<path d="M-2.6 -4.8 L3.8 0 L-2.6 4.8 Z" fill="#e2cf4e" stroke="#8a7a1c" stroke-width="0.9"/><path d="M-6.2 -2.2 h3.6 M-6.2 2.2 h3.6 M3.8 0 h2.8" stroke="#8a7a1c" stroke-width="1"/></g>
<g transform="translate(20.60,113.80)">
<path d="M-6 0 H6 M0 -6 V6" stroke="#3a6ea8" stroke-width="1.3"/><circle r="3.1" fill="#3a6ea8" stroke="#1f4a80" stroke-width="0.6"/></g>
<g transform="translate(20.60,131.00)">
<rect x="-6.4" y="-4.6" width="12.8" height="9.2" fill="#dfe6f2" stroke="#3a6ea8" stroke-width="0.7" stroke-dasharray="1.4 1"/>
<text x="0.00" y="3.20" font-family='"Liberation Sans", sans-serif' font-size="7.4" fill="#1f4a80" text-anchor="middle" textLength="11.20" lengthAdjust="spacingAndGlyphs" >LBL</text>
</g>
<g transform="translate(20.60,146.60)">
<path d="M-5.4 -4.6 h10.8 M-5.4 4.6 h10.8" stroke="#55524a" stroke-width="0.9"/><path d="M-5.4 -1.6 h10.8 M-5.4 1.4 h10.8" stroke="#4a4a52" stroke-width="1.7" stroke-dasharray="3 0.8"/></g>
<g transform="translate(20.60,163.00)">
<path d="M-6.4 0.6 H6.4" stroke="#3a6ea8" stroke-width="2.6"/><path d="M-3 -5 V0 M3 -5 V0" stroke="#3a6ea8" stroke-width="1.6"/></g>
<g transform="translate(20.60,180.60)">
<rect x="-3.8" y="-5.6" width="7.6" height="11.2" fill="#d8c44a" stroke="#7c6c18" stroke-width="0.9"/><path d="M-6.4 -2.6 h2.6 M-6.4 2.6 h2.6 M3.8 -2.6 h2.6 M3.8 2.6 h2.6" stroke="#7c6c18" stroke-width="1.3"/></g>
<line x1="13.50" y1="189.80" x2="28.50" y2="189.80" stroke="#cdc9b6" stroke-width="1" />
<line x1="13.50" y1="190.80" x2="28.50" y2="190.80" stroke="#fbfaf4" stroke-width="1" />
<g transform="translate(20.60,199.40)">
<rect x="-4.4" y="-5.4" width="8.8" height="4.2" rx="1.2" fill="#d8c44a" stroke="#7c6c18" stroke-width="0.8"/><rect x="-4.4" y="1.2" width="8.8" height="4.2" rx="1.2" fill="#d8c44a" stroke="#7c6c18" stroke-width="0.8"/></g>
<g transform="translate(20.60,216.40)">
<path d="M-2.4 -4.6 L4 0 L-2.4 4.6 Z" fill="#f4f3ea" stroke="#55524a" stroke-width="0.9"/><path d="M-6.4 0 h4 M4 0 h2.6" stroke="#55524a" stroke-width="0.9" stroke-dasharray="1.4 0.8"/></g>
<g transform="translate(20.60,232.80)">
<path d="M-5.4 -6 V5.4 H6" fill="none" stroke="#3c3a34" stroke-width="1"/><path d="M-5.4 3 L-2.4 -2.4 L0.4 1.4 L2.8 -4 L5.8 0" fill="none" stroke="#3a7a3a" stroke-width="1"/><path d="M-5.4 0 L-2 2.6 L1.6 -1.4 L5.6 3.2" fill="none" stroke="#a03030" stroke-width="0.8"/></g>
<g transform="translate(20.60,248.80)">
<rect x="-6.2" y="-4" width="12.4" height="8" rx="1" fill="#8c8c90" stroke="#4a4a52" stroke-width="0.8"/><rect x="-4.2" y="-1.6" width="8.4" height="3.6" fill="#d4d4dc"/><circle cx="-2.2" cy="0.2" r="1" fill="#4a4a52"/><circle cx="2.2" cy="0.2" r="1" fill="#4a4a52"/></g>
<g transform="translate(20.60,266.00)">
<circle r="5.6" fill="#4a78c0" stroke="#1f4a80" stroke-width="0.9"/><path d="M-3.6 0.4 Q-1.8 -4.6 0 0 Q1.8 4.6 3.6 -0.4" fill="none" stroke="#f0f4fc" stroke-width="1.2"/></g>
<g transform="translate(20.60,282.20)">
<path d="M-5.6 5.6 L-1 1 M-1 1 L3.4 -3.8 L5.4 -2 L1 2.8 Z" fill="#e8dc68" stroke="#6c6424" stroke-width="0.9"/>
<text x="-6.40" y="-1.20" font-family='"Liberation Sans", sans-serif' font-size="6.6" fill="#222" font-weight="bold" >v</text>
</g>
<g transform="translate(20.60,298.60)">
<path d="M-5.6 5.6 L-1 1 M-1 1 L3.4 -3.8 L5.4 -2 L1 2.8 Z" fill="#e8dc68" stroke="#6c6424" stroke-width="0.9"/>
<text x="-6.20" y="-0.60" font-family='"Liberation Sans", sans-serif' font-size="6.6" fill="#222" font-weight="bold" >I</text>
</g>
<g transform="translate(20.60,314.40)">
<path d="M-6 -4.6 H6 L4.6 1.4 H-4.6 Z" fill="#f0f0f4" stroke="#3c3c44" stroke-width="0.9"/><rect x="-4.6" y="1.4" width="9.2" height="3.6" fill="#6c6c74" stroke="#3c3c44" stroke-width="0.7"/><path d="M-3 -3 Q0 -0.2 3 -3" fill="none" stroke="#3c3c44" stroke-width="0.8"/></g>
<line x1="13.50" y1="324.00" x2="28.50" y2="324.00" stroke="#cdc9b6" stroke-width="1" />
<line x1="13.50" y1="325.00" x2="28.50" y2="325.00" stroke="#fbfaf4" stroke-width="1" />
<g transform="translate(20.60,334.20)">
<path d="M-5.6 5.4 L5.8 -5.6" stroke="#2e2e36" stroke-width="1.2"/></g>
<g transform="translate(20.60,352.00)">
<rect x="-5.4" y="-5.2" width="10.8" height="10.4" fill="#4f9aa0" stroke="#2f6e76" stroke-width="0.9"/></g>
<g transform="translate(20.60,368.60)">
<circle r="5.8" fill="#4f9aa0" stroke="#2f6e76" stroke-width="0.9"/></g>
<g transform="translate(20.60,385.40)">
<path d="M-4.8 -5 Q4.8 -5 4.8 5" fill="none" stroke="#2e2e36" stroke-width="1"/><path d="M-4.8 -5 V5 H4.8" fill="none" stroke="#4a6ac0" stroke-width="0.8" stroke-dasharray="1.4 1.2"/></g>
<g transform="translate(20.60,402.00)">
<path d="M-2.6 -5.2 Q-6 -5 -5.4 -1 Q-6 4.6 -2.2 5 Q0 4.8 0 2.6 Q0.4 5 3 4.8 Q6 4 5 -0.6 Q5.8 -5 2.4 -5 Q0.2 -4.6 0 -2.4 Q-0.4 -5 -2.6 -5.2 Z" fill="#4f9aa0" stroke="#2f6e76" stroke-width="0.8"/></g>
<text x="20.60" y="423.20" font-family='"Liberation Serif", serif' font-size="13.2" fill="#1a1a1a" text-anchor="middle" font-weight="bold" >A</text>
<g transform="translate(20.60,435.00)">
<rect x="-5.6" y="-5" width="11.2" height="10" fill="#3a3e46" stroke="#1e2228" stroke-width="0.8"/><path d="M3.2 -2.6 H-3 V0 H3 V2.8 H-3.4" fill="none" stroke="#e4f0f0" stroke-width="1.2"/></g>
<g transform="translate(20.60,451.40)">
<path d="M-6 0 H6 M0 -6 V6" stroke="#5a6a6a" stroke-width="1.1"/><circle r="2.6" fill="#4a5a5c"/></g>
<g transform="translate(42.00,80.80)">
<path d="M3.6 -2.4 A4.7 4.7 0 1 0 4.4 2.2" fill="none" stroke="#3a5c92" stroke-width="2.1"/><path d="M5.8 -6 V-0.6 H0.6 Z" fill="#3a5c92"/></g>
<g transform="translate(42.00,98.00)">
<path d="M-3.6 -2.4 A4.7 4.7 0 1 1 -4.4 2.2" fill="none" stroke="#3a5c92" stroke-width="2.1"/><path d="M-5.8 -6 V-0.6 H-0.6 Z" fill="#3a5c92"/></g>
<rect x="34.40" y="107.40" width="17.40" height="11.60" fill="#ffffff" stroke="#7f7d70" stroke-width="1" />
<line x1="34.40" y1="107.40" x2="51.80" y2="107.40" stroke="#55534a" stroke-width="1" />
<line x1="34.40" y1="107.40" x2="34.40" y2="119.00" stroke="#55534a" stroke-width="1" />
<text x="36.20" y="116.80" font-family='"Liberation Sans", sans-serif' font-size="8.6" fill="#1a1a1a" textLength="7.60" lengthAdjust="spacingAndGlyphs" >0°</text>
<line x1="35.00" y1="122.60" x2="52.00" y2="122.60" stroke="#cdc9b6" stroke-width="1" />
<line x1="35.00" y1="123.60" x2="52.00" y2="123.60" stroke="#fbfaf4" stroke-width="1" />
<g transform="translate(42.00,133.40)">
<path d="M-6.4 0 L-2.6 -3.8 V-1.3 H2.6 V-3.8 L6.4 0 L2.6 3.8 V1.3 H-2.6 V3.8 Z" fill="#4a6eb0" stroke="#2c4a86" stroke-width="0.6"/></g>
<g transform="translate(42.00,150.80)">
<path d="M0 -6.6 L3.6 -2.8 H1.3 V2.8 H3.6 L0 6.6 L-3.6 2.8 H-1.3 V-2.8 H-3.6 Z" fill="#3a5c9a" stroke="#24407a" stroke-width="0.6"/></g>
<rect x="56.00" y="68.60" width="90.20" height="75.20" fill="#dadccb" stroke="#6e6c60" stroke-width="1" />
<line x1="56.00" y1="144.30" x2="146.60" y2="144.30" stroke="#ffffff" stroke-width="1" />
<line x1="146.70" y1="68.60" x2="146.70" y2="144.30" stroke="#ffffff" stroke-width="1" />
<clipPath id="cpOv"><rect x="56.6" y="69.2" width="89" height="74"/></clipPath><g clip-path="url(#cpOv)">
<rect x="63.60" y="75.00" width="75.80" height="63.00" fill="none" stroke="#6464c4" stroke-width="1.4" />
<rect x="50.00" y="79.60" width="74.70" height="41.50" fill="#e0e6d6" stroke="#3a9c40" stroke-width="1.2" />
<rect x="63.60" y="75.00" width="75.80" height="63.00" fill="none" stroke="#6464c4" stroke-width="1.4" />
<rect x="73.60" y="90.40" width="10.40" height="23.80" fill="#e6e6da" stroke="#22221e" stroke-width="1.1" />
<rect x="84.40" y="91.80" width="12.60" height="5.00" fill="#121212" />
<rect x="97.40" y="90.40" width="2.80" height="8.20" fill="#e6e6da" stroke="#121212" stroke-width="1.0" />
<rect x="100.40" y="91.60" width="9.60" height="4.80" fill="#121212" />
<rect x="108.40" y="88.00" width="2.80" height="6.00" fill="#121212" />
<rect x="84.40" y="99.40" width="30.80" height="2.40" fill="#121212" />
<rect x="112.60" y="88.00" width="2.80" height="13.80" fill="#121212" />
<rect x="105.00" y="77.40" width="11.60" height="11.00" fill="#101410" stroke="#2c3c2c" stroke-width="0.8" />
<path d="M108.6 79.4 v6.6 M111.4 79.4 v6.6 M113.8 79.4 v6.6" stroke="#b8c0b8" stroke-width="1.0"/><path d="M106.6 86.8 h8" stroke="#c8d0c8" stroke-width="0.8"/>
<path d="M84.6 110.4 H99.2 V106.8 M91.4 110.4 V113.4 H94 V116.2" fill="none" stroke="#1a1a1a" stroke-width="1.1"/><rect x="95.2" y="109.4" width="3.4" height="1.8" fill="#1a1a1a"/><rect x="93.2" y="115.6" width="1.8" height="1.6" fill="#1a1a1a"/>
</g>
<rect x="56.40" y="148.20" width="10.40" height="11.60" fill="#f4f2e8" stroke="#7a786a" stroke-width="0.9" />
<rect x="67.60" y="148.20" width="12.40" height="11.60" fill="#f4f2e8" stroke="#7a786a" stroke-width="0.9" />
<text x="61.60" y="157.60" font-family='"Liberation Sans", sans-serif' font-size="8.8" fill="#1a1a1a" text-anchor="middle" >P</text>
<text x="73.80" y="157.60" font-family='"Liberation Sans", sans-serif' font-size="8.8" fill="#1a1a1a" text-anchor="middle" >L</text>
<rect x="80.60" y="147.80" width="66.00" height="12.20" fill="#7393dd" />
<text x="113.60" y="157.40" font-family='"Liberation Sans", sans-serif' font-size="8.2" fill="#dfe8fa" text-anchor="middle" textLength="34.00" lengthAdjust="spacingAndGlyphs" >DEVICES</text>
<rect x="56.40" y="160.00" width="90.20" height="364.40" fill="#ffffff" stroke="#7a786a" stroke-width="1" />
<line x1="56.40" y1="524.60" x2="147.00" y2="524.60" stroke="#ffffff" stroke-width="1" />
<text x="58.40" y="168.60" font-family='"Liberation Sans", sans-serif' font-size="8.2" fill="#141414" textLength="57.40" lengthAdjust="spacingAndGlyphs" >7SEG-MPX2-CA</text>
<text x="58.40" y="178.40" font-family='"Liberation Sans", sans-serif' font-size="8.2" fill="#141414" textLength="35.20" lengthAdjust="spacingAndGlyphs" >AT89C52</text>
<rect x="57.00" y="180.10" width="89.00" height="10.00" fill="#2f62c0" />
<text x="58.40" y="188.20" font-family='"Liberation Sans", sans-serif' font-size="8.2" fill="#ffffff" textLength="32.60" lengthAdjust="spacingAndGlyphs" >BUTTON</text>
<text x="58.40" y="198.00" font-family='"Liberation Sans", sans-serif' font-size="8.2" fill="#141414" textLength="15.60" lengthAdjust="spacingAndGlyphs" >RES</text>
<text x="58.40" y="207.80" font-family='"Liberation Sans", sans-serif' font-size="8.2" fill="#141414" textLength="15.60" lengthAdjust="spacingAndGlyphs" >RX8</text>
<rect x="150.00" y="68.00" width="860.00" height="456.60" fill="#e0e1d1" />
<clipPath id="cpCv"><rect x="151.0" y="69.0" width="858.0" height="455.0"/></clipPath>
<g clip-path="url(#cpCv)">
<path d="M153.68 68.0 V524.6 M163.15 68.0 V524.6 M172.61 68.0 V524.6 M182.07 68.0 V524.6 M191.53 68.0 V524.6 M201.00 68.0 V524.6 M210.46 68.0 V524.6 M219.92 68.0 V524.6 M229.39 68.0 V524.6 M238.85 68.0 V524.6 M248.31 68.0 V524.6 M257.78 68.0 V524.6 M267.24 68.0 V524.6 M276.70 68.0 V524.6 M286.16 68.0 V524.6 M295.63 68.0 V524.6 M305.09 68.0 V524.6 M314.55 68.0 V524.6 M324.02 68.0 V524.6 M333.48 68.0 V524.6 M342.94 68.0 V524.6 M352.41 68.0 V524.6 M361.87 68.0 V524.6 M371.33 68.0 V524.6 M380.79 68.0 V524.6 M390.26 68.0 V524.6 M399.72 68.0 V524.6 M409.18 68.0 V524.6 M418.65 68.0 V524.6 M428.11 68.0 V524.6 M437.57 68.0 V524.6 M447.04 68.0 V524.6 M456.50 68.0 V524.6 M465.96 68.0 V524.6 M475.42 68.0 V524.6 M484.89 68.0 V524.6 M494.35 68.0 V524.6 M503.81 68.0 V524.6 M513.28 68.0 V524.6 M522.74 68.0 V524.6 M532.20 68.0 V524.6 M541.67 68.0 V524.6 M551.13 68.0 V524.6 M560.59 68.0 V524.6 M570.05 68.0 V524.6 M579.52 68.0 V524.6 M588.98 68.0 V524.6 M598.44 68.0 V524.6 M607.91 68.0 V524.6 M617.37 68.0 V524.6 M626.83 68.0 V524.6 M636.30 68.0 V524.6 M645.76 68.0 V524.6 M655.22 68.0 V524.6 M664.68 68.0 V524.6 M674.15 68.0 V524.6 M683.61 68.0 V524.6 M693.07 68.0 V524.6 M702.54 68.0 V524.6 M712.00 68.0 V524.6 M721.46 68.0 V524.6 M730.93 68.0 V524.6 M740.39 68.0 V524.6 M749.85 68.0 V524.6 M759.31 68.0 V524.6 M768.78 68.0 V524.6 M778.24 68.0 V524.6 M787.70 68.0 V524.6 M797.17 68.0 V524.6 M806.63 68.0 V524.6 M816.09 68.0 V524.6 M825.56 68.0 V524.6 M835.02 68.0 V524.6 M844.48 68.0 V524.6 M853.94 68.0 V524.6 M863.41 68.0 V524.6 M872.87 68.0 V524.6 M882.33 68.0 V524.6 M891.80 68.0 V524.6 M901.26 68.0 V524.6 M910.72 68.0 V524.6 M920.19 68.0 V524.6 M929.65 68.0 V524.6 M939.11 68.0 V524.6 M948.57 68.0 V524.6 M958.04 68.0 V524.6 M967.50 68.0 V524.6 M976.96 68.0 V524.6 M986.43 68.0 V524.6 M995.89 68.0 V524.6 M1005.35 68.0 V524.6 M150.0 75.06 H1010.0 M150.0 84.54 H1010.0 M150.0 94.02 H1010.0 M150.0 103.50 H1010.0 M150.0 112.98 H1010.0 M150.0 122.46 H1010.0 M150.0 131.94 H1010.0 M150.0 141.42 H1010.0 M150.0 150.90 H1010.0 M150.0 160.38 H1010.0 M150.0 169.86 H1010.0 M150.0 179.34 H1010.0 M150.0 188.82 H1010.0 M150.0 198.30 H1010.0 M150.0 207.78 H1010.0 M150.0 217.26 H1010.0 M150.0 226.74 H1010.0 M150.0 236.22 H1010.0 M150.0 245.70 H1010.0 M150.0 255.18 H1010.0 M150.0 264.66 H1010.0 M150.0 274.14 H1010.0 M150.0 283.62 H1010.0 M150.0 293.10 H1010.0 M150.0 302.58 H1010.0 M150.0 312.06 H1010.0 M150.0 321.54 H1010.0 M150.0 331.02 H1010.0 M150.0 340.50 H1010.0 M150.0 349.98 H1010.0 M150.0 359.46 H1010.0 M150.0 368.94 H1010.0 M150.0 378.42 H1010.0 M150.0 387.90 H1010.0 M150.0 397.38 H1010.0 M150.0 406.86 H1010.0 M150.0 416.34 H1010.0 M150.0 425.82 H1010.0 M150.0 435.30 H1010.0 M150.0 444.78 H1010.0 M150.0 454.26 H1010.0 M150.0 463.74 H1010.0 M150.0 473.22 H1010.0 M150.0 482.70 H1010.0 M150.0 492.18 H1010.0 M150.0 501.66 H1010.0 M150.0 511.14 H1010.0 M150.0 520.62 H1010.0" stroke="#bdbfad" stroke-width="1" fill="none"/>
<line x1="238.85" y1="68.00" x2="238.85" y2="524.60" stroke="#7272aa" stroke-width="2.1" />
<rect x="361.87" y="188.82" width="132.48" height="255.96" fill="#c9c9a9" stroke="#840e14" stroke-width="1.7" />
<text x="360.27" y="186.62" font-family='"Liberation Sans", sans-serif' font-size="12.2" fill="#5a5a5a" textLength="13.80" lengthAdjust="spacingAndGlyphs" >U1</text>
<text x="361.47" y="452.58" font-family='"Liberation Sans", sans-serif' font-size="6.8" fill="#1a1a1a" textLength="33.00" lengthAdjust="spacingAndGlyphs" stroke="#1a1a1a" stroke-width="0.2">AT89C52</text>
<text x="361.67" y="461.38" font-family='"Liberation Sans", sans-serif' font-size="6.8" fill="#a6a6a6" textLength="29.00" lengthAdjust="spacingAndGlyphs" >&lt;TEXT&gt;</text>
<line x1="342.94" y1="198.30" x2="361.87" y2="198.30" stroke="#7e0e14" stroke-width="1.5" />
<text x="351.87" y="196.80" font-family='"Liberation Sans", sans-serif' font-size="8.1" fill="#141414" text-anchor="end" stroke="#141414" stroke-width="0.2">19</text>
<text x="366.47" y="200.80" font-family='"Liberation Sans", sans-serif' font-size="6.7" fill="#1e1e22" textLength="23.21" lengthAdjust="spacingAndGlyphs" stroke="#1e1e22" stroke-width="0.15">XTAL1</text>
<line x1="342.94" y1="226.74" x2="361.87" y2="226.74" stroke="#7e0e14" stroke-width="1.5" />
<text x="351.87" y="225.24" font-family='"Liberation Sans", sans-serif' font-size="8.1" fill="#141414" text-anchor="end" stroke="#141414" stroke-width="0.2">18</text>
<text x="366.47" y="229.24" font-family='"Liberation Sans", sans-serif' font-size="6.7" fill="#1e1e22" textLength="23.21" lengthAdjust="spacingAndGlyphs" stroke="#1e1e22" stroke-width="0.15">XTAL2</text>
<line x1="342.94" y1="264.66" x2="361.87" y2="264.66" stroke="#7e0e14" stroke-width="1.5" />
<rect x="353.97" y="257.96" width="4.50" height="4.50" fill="#8a8a8a" />
<text x="351.87" y="263.16" font-family='"Liberation Sans", sans-serif' font-size="8.1" fill="#141414" text-anchor="end" stroke="#141414" stroke-width="0.2">9</text>
<text x="366.47" y="267.16" font-family='"Liberation Sans", sans-serif' font-size="6.7" fill="#1e1e22" textLength="15.56" lengthAdjust="spacingAndGlyphs" stroke="#1e1e22" stroke-width="0.15">RST</text>
<line x1="342.94" y1="312.06" x2="361.87" y2="312.06" stroke="#7e0e14" stroke-width="1.5" />
<rect x="353.97" y="305.36" width="4.50" height="4.50" fill="#e23a3a" />
<text x="351.87" y="310.56" font-family='"Liberation Sans", sans-serif' font-size="8.1" fill="#141414" text-anchor="end" stroke="#141414" stroke-width="0.2">29</text>
<text x="366.47" y="314.56" font-family='"Liberation Sans", sans-serif' font-size="6.7" fill="#1e1e22" textLength="21.19" lengthAdjust="spacingAndGlyphs" stroke="#1e1e22" stroke-width="0.15">PSEN</text>
<line x1="366.47" y1="308.86" x2="387.66" y2="308.86" stroke="#1e1e22" stroke-width="0.8" />
<line x1="342.94" y1="321.54" x2="361.87" y2="321.54" stroke="#7e0e14" stroke-width="1.5" />
<rect x="353.97" y="314.84" width="4.50" height="4.50" fill="#e23a3a" />
<text x="351.87" y="320.04" font-family='"Liberation Sans", sans-serif' font-size="8.1" fill="#141414" text-anchor="end" stroke="#141414" stroke-width="0.2">30</text>
<text x="366.47" y="324.04" font-family='"Liberation Sans", sans-serif' font-size="6.7" fill="#1e1e22" textLength="14.71" lengthAdjust="spacingAndGlyphs" stroke="#1e1e22" stroke-width="0.15">ALE</text>
<line x1="342.94" y1="331.02" x2="361.87" y2="331.02" stroke="#7e0e14" stroke-width="1.5" />
<rect x="353.97" y="324.32" width="4.50" height="4.50" fill="#8a8a8a" />
<text x="351.87" y="329.52" font-family='"Liberation Sans", sans-serif' font-size="8.1" fill="#141414" text-anchor="end" stroke="#141414" stroke-width="0.2">31</text>
<text x="366.47" y="333.52" font-family='"Liberation Sans", sans-serif' font-size="6.7" fill="#1e1e22" textLength="10.38" lengthAdjust="spacingAndGlyphs" stroke="#1e1e22" stroke-width="0.15">EA</text>
<line x1="366.47" y1="327.82" x2="376.85" y2="327.82" stroke="#1e1e22" stroke-width="0.8" />
<line x1="342.94" y1="368.94" x2="361.87" y2="368.94" stroke="#7e0e14" stroke-width="1.5" />
<rect x="353.97" y="362.24" width="4.50" height="4.50" fill="#e23a3a" />
<text x="351.87" y="367.44" font-family='"Liberation Sans", sans-serif' font-size="8.1" fill="#141414" text-anchor="end" stroke="#141414" stroke-width="0.2">1</text>
<text x="366.47" y="371.44" font-family='"Liberation Sans", sans-serif' font-size="6.7" fill="#1e1e22" textLength="27.24" lengthAdjust="spacingAndGlyphs" stroke="#1e1e22" stroke-width="0.15">P1.0/T2</text>
<line x1="342.94" y1="378.42" x2="361.87" y2="378.42" stroke="#7e0e14" stroke-width="1.5" />
<rect x="353.97" y="371.72" width="4.50" height="4.50" fill="#e23a3a" />
<text x="351.87" y="376.92" font-family='"Liberation Sans", sans-serif' font-size="8.1" fill="#141414" text-anchor="end" stroke="#141414" stroke-width="0.2">2</text>
<text x="366.47" y="380.92" font-family='"Liberation Sans", sans-serif' font-size="6.7" fill="#1e1e22" textLength="37.62" lengthAdjust="spacingAndGlyphs" stroke="#1e1e22" stroke-width="0.15">P1.1/T2EX</text>
<line x1="342.94" y1="387.90" x2="361.87" y2="387.90" stroke="#7e0e14" stroke-width="1.5" />
<rect x="353.97" y="381.20" width="4.50" height="4.50" fill="#e23a3a" />
<text x="351.87" y="386.40" font-family='"Liberation Sans", sans-serif' font-size="8.1" fill="#141414" text-anchor="end" stroke="#141414" stroke-width="0.2">3</text>
<text x="366.47" y="390.40" font-family='"Liberation Sans", sans-serif' font-size="6.7" fill="#1e1e22" textLength="16.00" lengthAdjust="spacingAndGlyphs" stroke="#1e1e22" stroke-width="0.15">P1.2</text>
<line x1="342.94" y1="397.38" x2="361.87" y2="397.38" stroke="#7e0e14" stroke-width="1.5" />
<rect x="353.97" y="390.68" width="4.50" height="4.50" fill="#e23a3a" />
<text x="351.87" y="395.88" font-family='"Liberation Sans", sans-serif' font-size="8.1" fill="#141414" text-anchor="end" stroke="#141414" stroke-width="0.2">4</text>
<text x="366.47" y="399.88" font-family='"Liberation Sans", sans-serif' font-size="6.7" fill="#1e1e22" textLength="16.00" lengthAdjust="spacingAndGlyphs" stroke="#1e1e22" stroke-width="0.15">P1.3</text>
<line x1="342.94" y1="406.86" x2="361.87" y2="406.86" stroke="#7e0e14" stroke-width="1.5" />
<rect x="353.97" y="400.16" width="4.50" height="4.50" fill="#e23a3a" />
<text x="351.87" y="405.36" font-family='"Liberation Sans", sans-serif' font-size="8.1" fill="#141414" text-anchor="end" stroke="#141414" stroke-width="0.2">5</text>
<text x="366.47" y="409.36" font-family='"Liberation Sans", sans-serif' font-size="6.7" fill="#1e1e22" textLength="16.00" lengthAdjust="spacingAndGlyphs" stroke="#1e1e22" stroke-width="0.15">P1.4</text>
<line x1="342.94" y1="416.34" x2="361.87" y2="416.34" stroke="#7e0e14" stroke-width="1.5" />
<rect x="353.97" y="409.64" width="4.50" height="4.50" fill="#e23a3a" />
<text x="351.87" y="414.84" font-family='"Liberation Sans", sans-serif' font-size="8.1" fill="#141414" text-anchor="end" stroke="#141414" stroke-width="0.2">6</text>
<text x="366.47" y="418.84" font-family='"Liberation Sans", sans-serif' font-size="6.7" fill="#1e1e22" textLength="16.00" lengthAdjust="spacingAndGlyphs" stroke="#1e1e22" stroke-width="0.15">P1.5</text>
<line x1="342.94" y1="425.82" x2="361.87" y2="425.82" stroke="#7e0e14" stroke-width="1.5" />
<rect x="353.97" y="419.12" width="4.50" height="4.50" fill="#e23a3a" />
<text x="351.87" y="424.32" font-family='"Liberation Sans", sans-serif' font-size="8.1" fill="#141414" text-anchor="end" stroke="#141414" stroke-width="0.2">7</text>
<text x="366.47" y="428.32" font-family='"Liberation Sans", sans-serif' font-size="6.7" fill="#1e1e22" textLength="16.00" lengthAdjust="spacingAndGlyphs" stroke="#1e1e22" stroke-width="0.15">P1.6</text>
<line x1="342.94" y1="435.30" x2="361.87" y2="435.30" stroke="#7e0e14" stroke-width="1.5" />
<rect x="353.97" y="428.60" width="4.50" height="4.50" fill="#e23a3a" />
<text x="351.87" y="433.80" font-family='"Liberation Sans", sans-serif' font-size="8.1" fill="#141414" text-anchor="end" stroke="#141414" stroke-width="0.2">8</text>
<text x="366.47" y="437.80" font-family='"Liberation Sans", sans-serif' font-size="6.7" fill="#1e1e22" textLength="16.00" lengthAdjust="spacingAndGlyphs" stroke="#1e1e22" stroke-width="0.15">P1.7</text>
<path d="M361.87 195.90 L364.87 198.30 L361.87 200.70" fill="none" stroke="#840e14" stroke-width="1.1"/>
<line x1="494.35" y1="198.30" x2="513.28" y2="198.30" stroke="#7e0e14" stroke-width="1.5" />
<rect x="498.35" y="191.60" width="4.50" height="4.50" fill="#3440e0" />
<text x="503.35" y="196.80" font-family='"Liberation Sans", sans-serif' font-size="8.1" fill="#141414" stroke="#141414" stroke-width="0.2">39</text>
<text x="456.45" y="200.80" font-family='"Liberation Sans", sans-serif' font-size="6.7" fill="#1e1e22" textLength="33.30" lengthAdjust="spacingAndGlyphs" stroke="#1e1e22" stroke-width="0.15">P0.0/AD0</text>
<line x1="494.35" y1="207.78" x2="513.28" y2="207.78" stroke="#7e0e14" stroke-width="1.5" />
<rect x="498.35" y="201.08" width="4.50" height="4.50" fill="#3440e0" />
<text x="503.35" y="206.28" font-family='"Liberation Sans", sans-serif' font-size="8.1" fill="#141414" stroke="#141414" stroke-width="0.2">38</text>
<text x="456.45" y="210.28" font-family='"Liberation Sans", sans-serif' font-size="6.7" fill="#1e1e22" textLength="33.30" lengthAdjust="spacingAndGlyphs" stroke="#1e1e22" stroke-width="0.15">P0.1/AD1</text>
<line x1="494.35" y1="217.26" x2="513.28" y2="217.26" stroke="#7e0e14" stroke-width="1.5" />
<rect x="498.35" y="210.56" width="4.50" height="4.50" fill="#3440e0" />
<text x="503.35" y="215.76" font-family='"Liberation Sans", sans-serif' font-size="8.1" fill="#141414" stroke="#141414" stroke-width="0.2">37</text>
<text x="456.45" y="219.76" font-family='"Liberation Sans", sans-serif' font-size="6.7" fill="#1e1e22" textLength="33.30" lengthAdjust="spacingAndGlyphs" stroke="#1e1e22" stroke-width="0.15">P0.2/AD2</text>
<line x1="494.35" y1="226.74" x2="513.28" y2="226.74" stroke="#7e0e14" stroke-width="1.5" />
<rect x="498.35" y="220.04" width="4.50" height="4.50" fill="#3440e0" />
<text x="503.35" y="225.24" font-family='"Liberation Sans", sans-serif' font-size="8.1" fill="#141414" stroke="#141414" stroke-width="0.2">36</text>
<text x="456.45" y="229.24" font-family='"Liberation Sans", sans-serif' font-size="6.7" fill="#1e1e22" textLength="33.30" lengthAdjust="spacingAndGlyphs" stroke="#1e1e22" stroke-width="0.15">P0.3/AD3</text>
<line x1="494.35" y1="236.22" x2="513.28" y2="236.22" stroke="#7e0e14" stroke-width="1.5" />
<rect x="498.35" y="229.52" width="4.50" height="4.50" fill="#e23a3a" />
<text x="503.35" y="234.72" font-family='"Liberation Sans", sans-serif' font-size="8.1" fill="#141414" stroke="#141414" stroke-width="0.2">35</text>
<text x="456.45" y="238.72" font-family='"Liberation Sans", sans-serif' font-size="6.7" fill="#1e1e22" textLength="33.30" lengthAdjust="spacingAndGlyphs" stroke="#1e1e22" stroke-width="0.15">P0.4/AD4</text>
<line x1="494.35" y1="245.70" x2="513.28" y2="245.70" stroke="#7e0e14" stroke-width="1.5" />
<rect x="498.35" y="239.00" width="4.50" height="4.50" fill="#e23a3a" />
<text x="503.35" y="244.20" font-family='"Liberation Sans", sans-serif' font-size="8.1" fill="#141414" stroke="#141414" stroke-width="0.2">34</text>
<text x="456.45" y="248.20" font-family='"Liberation Sans", sans-serif' font-size="6.7" fill="#1e1e22" textLength="33.30" lengthAdjust="spacingAndGlyphs" stroke="#1e1e22" stroke-width="0.15">P0.5/AD5</text>
<line x1="494.35" y1="255.18" x2="513.28" y2="255.18" stroke="#7e0e14" stroke-width="1.5" />
<rect x="498.35" y="248.48" width="4.50" height="4.50" fill="#3440e0" />
<text x="503.35" y="253.68" font-family='"Liberation Sans", sans-serif' font-size="8.1" fill="#141414" stroke="#141414" stroke-width="0.2">33</text>
<text x="456.45" y="257.68" font-family='"Liberation Sans", sans-serif' font-size="6.7" fill="#1e1e22" textLength="33.30" lengthAdjust="spacingAndGlyphs" stroke="#1e1e22" stroke-width="0.15">P0.6/AD6</text>
<line x1="494.35" y1="264.66" x2="513.28" y2="264.66" stroke="#7e0e14" stroke-width="1.5" />
<rect x="498.35" y="257.96" width="4.50" height="4.50" fill="#8a8a8a" />
<text x="503.35" y="263.16" font-family='"Liberation Sans", sans-serif' font-size="8.1" fill="#141414" stroke="#141414" stroke-width="0.2">32</text>
<text x="456.45" y="267.16" font-family='"Liberation Sans", sans-serif' font-size="6.7" fill="#1e1e22" textLength="33.30" lengthAdjust="spacingAndGlyphs" stroke="#1e1e22" stroke-width="0.15">P0.7/AD7</text>
<line x1="494.35" y1="283.62" x2="513.28" y2="283.62" stroke="#7e0e14" stroke-width="1.5" />
<rect x="498.35" y="276.92" width="4.50" height="4.50" fill="#e23a3a" />
<text x="503.35" y="282.12" font-family='"Liberation Sans", sans-serif' font-size="8.1" fill="#141414" stroke="#141414" stroke-width="0.2">21</text>
<text x="462.07" y="286.12" font-family='"Liberation Sans", sans-serif' font-size="6.7" fill="#1e1e22" textLength="27.68" lengthAdjust="spacingAndGlyphs" stroke="#1e1e22" stroke-width="0.15">P2.0/A8</text>
<line x1="494.35" y1="293.10" x2="513.28" y2="293.10" stroke="#7e0e14" stroke-width="1.5" />
<rect x="498.35" y="286.40" width="4.50" height="4.50" fill="#e23a3a" />
<text x="503.35" y="291.60" font-family='"Liberation Sans", sans-serif' font-size="8.1" fill="#141414" stroke="#141414" stroke-width="0.2">22</text>
<text x="462.07" y="295.60" font-family='"Liberation Sans", sans-serif' font-size="6.7" fill="#1e1e22" textLength="27.68" lengthAdjust="spacingAndGlyphs" stroke="#1e1e22" stroke-width="0.15">P2.1/A9</text>
<line x1="494.35" y1="302.58" x2="513.28" y2="302.58" stroke="#7e0e14" stroke-width="1.5" />
<rect x="498.35" y="295.88" width="4.50" height="4.50" fill="#e23a3a" />
<text x="503.35" y="301.08" font-family='"Liberation Sans", sans-serif' font-size="8.1" fill="#141414" stroke="#141414" stroke-width="0.2">23</text>
<text x="457.74" y="305.08" font-family='"Liberation Sans", sans-serif' font-size="6.7" fill="#1e1e22" textLength="32.01" lengthAdjust="spacingAndGlyphs" stroke="#1e1e22" stroke-width="0.15">P2.2/A10</text>
<line x1="494.35" y1="312.06" x2="513.28" y2="312.06" stroke="#7e0e14" stroke-width="1.5" />
<rect x="498.35" y="305.36" width="4.50" height="4.50" fill="#3440e0" />
<text x="503.35" y="310.56" font-family='"Liberation Sans", sans-serif' font-size="8.1" fill="#141414" stroke="#141414" stroke-width="0.2">24</text>
<text x="458.32" y="314.56" font-family='"Liberation Sans", sans-serif' font-size="6.7" fill="#1e1e22" textLength="31.43" lengthAdjust="spacingAndGlyphs" stroke="#1e1e22" stroke-width="0.15">P2.3/A11</text>
<line x1="494.35" y1="321.54" x2="513.28" y2="321.54" stroke="#7e0e14" stroke-width="1.5" />
<rect x="498.35" y="314.84" width="4.50" height="4.50" fill="#e23a3a" />
<text x="503.35" y="320.04" font-family='"Liberation Sans", sans-serif' font-size="8.1" fill="#141414" stroke="#141414" stroke-width="0.2">25</text>
<text x="457.74" y="324.04" font-family='"Liberation Sans", sans-serif' font-size="6.7" fill="#1e1e22" textLength="32.01" lengthAdjust="spacingAndGlyphs" stroke="#1e1e22" stroke-width="0.15">P2.4/A12</text>
<line x1="494.35" y1="331.02" x2="513.28" y2="331.02" stroke="#7e0e14" stroke-width="1.5" />
<rect x="498.35" y="324.32" width="4.50" height="4.50" fill="#e23a3a" />
<text x="503.35" y="329.52" font-family='"Liberation Sans", sans-serif' font-size="8.1" fill="#141414" stroke="#141414" stroke-width="0.2">26</text>
<text x="457.74" y="333.52" font-family='"Liberation Sans", sans-serif' font-size="6.7" fill="#1e1e22" textLength="32.01" lengthAdjust="spacingAndGlyphs" stroke="#1e1e22" stroke-width="0.15">P2.5/A13</text>
<line x1="494.35" y1="340.50" x2="513.28" y2="340.50" stroke="#7e0e14" stroke-width="1.5" />
<rect x="498.35" y="333.80" width="4.50" height="4.50" fill="#e23a3a" />
<text x="503.35" y="339.00" font-family='"Liberation Sans", sans-serif' font-size="8.1" fill="#141414" stroke="#141414" stroke-width="0.2">27</text>
<text x="457.74" y="343.00" font-family='"Liberation Sans", sans-serif' font-size="6.7" fill="#1e1e22" textLength="32.01" lengthAdjust="spacingAndGlyphs" stroke="#1e1e22" stroke-width="0.15">P2.6/A14</text>
<line x1="494.35" y1="349.98" x2="513.28" y2="349.98" stroke="#7e0e14" stroke-width="1.5" />
<rect x="498.35" y="343.28" width="4.50" height="4.50" fill="#e23a3a" />
<text x="503.35" y="348.48" font-family='"Liberation Sans", sans-serif' font-size="8.1" fill="#141414" stroke="#141414" stroke-width="0.2">28</text>
<text x="457.74" y="352.48" font-family='"Liberation Sans", sans-serif' font-size="6.7" fill="#1e1e22" textLength="32.01" lengthAdjust="spacingAndGlyphs" stroke="#1e1e22" stroke-width="0.15">P2.7/A15</text>
<line x1="494.35" y1="368.94" x2="513.28" y2="368.94" stroke="#7e0e14" stroke-width="1.5" />
<rect x="498.35" y="362.24" width="4.50" height="4.50" fill="#e23a3a" />
<text x="503.35" y="367.44" font-family='"Liberation Sans", sans-serif' font-size="8.1" fill="#141414" stroke="#141414" stroke-width="0.2">10</text>
<text x="455.16" y="371.44" font-family='"Liberation Sans", sans-serif' font-size="6.7" fill="#1e1e22" textLength="34.59" lengthAdjust="spacingAndGlyphs" stroke="#1e1e22" stroke-width="0.15">P3.0/RXD</text>
<line x1="494.35" y1="378.42" x2="513.28" y2="378.42" stroke="#7e0e14" stroke-width="1.5" />
<rect x="498.35" y="371.72" width="4.50" height="4.50" fill="#e23a3a" />
<text x="503.35" y="376.92" font-family='"Liberation Sans", sans-serif' font-size="8.1" fill="#141414" stroke="#141414" stroke-width="0.2">11</text>
<text x="456.03" y="380.92" font-family='"Liberation Sans", sans-serif' font-size="6.7" fill="#1e1e22" textLength="33.73" lengthAdjust="spacingAndGlyphs" stroke="#1e1e22" stroke-width="0.15">P3.1/TXD</text>
<line x1="474.19" y1="375.22" x2="489.75" y2="375.22" stroke="#1e1e22" stroke-width="0.8" />
<line x1="494.35" y1="387.90" x2="513.28" y2="387.90" stroke="#7e0e14" stroke-width="1.5" />
<rect x="498.35" y="381.20" width="4.50" height="4.50" fill="#e23a3a" />
<text x="503.35" y="386.40" font-family='"Liberation Sans", sans-serif' font-size="8.1" fill="#141414" stroke="#141414" stroke-width="0.2">12</text>
<text x="454.73" y="390.40" font-family='"Liberation Sans", sans-serif' font-size="6.7" fill="#1e1e22" textLength="35.02" lengthAdjust="spacingAndGlyphs" stroke="#1e1e22" stroke-width="0.15">P3.2/INT0</text>
<line x1="472.89" y1="384.70" x2="489.75" y2="384.70" stroke="#1e1e22" stroke-width="0.8" />
<line x1="494.35" y1="397.38" x2="513.28" y2="397.38" stroke="#7e0e14" stroke-width="1.5" />
<rect x="498.35" y="390.68" width="4.50" height="4.50" fill="#e23a3a" />
<text x="503.35" y="395.88" font-family='"Liberation Sans", sans-serif' font-size="8.1" fill="#141414" stroke="#141414" stroke-width="0.2">13</text>
<text x="454.73" y="399.88" font-family='"Liberation Sans", sans-serif' font-size="6.7" fill="#1e1e22" textLength="35.02" lengthAdjust="spacingAndGlyphs" stroke="#1e1e22" stroke-width="0.15">P3.3/INT1</text>
<line x1="472.89" y1="394.18" x2="489.75" y2="394.18" stroke="#1e1e22" stroke-width="0.8" />
<line x1="494.35" y1="406.86" x2="513.28" y2="406.86" stroke="#7e0e14" stroke-width="1.5" />
<rect x="498.35" y="400.16" width="4.50" height="4.50" fill="#e23a3a" />
<text x="503.35" y="405.36" font-family='"Liberation Sans", sans-serif' font-size="8.1" fill="#141414" stroke="#141414" stroke-width="0.2">14</text>
<text x="462.51" y="409.36" font-family='"Liberation Sans", sans-serif' font-size="6.7" fill="#1e1e22" textLength="27.24" lengthAdjust="spacingAndGlyphs" stroke="#1e1e22" stroke-width="0.15">P3.4/T0</text>
<line x1="494.35" y1="416.34" x2="513.28" y2="416.34" stroke="#7e0e14" stroke-width="1.5" />
<rect x="498.35" y="409.64" width="4.50" height="4.50" fill="#e23a3a" />
<text x="503.35" y="414.84" font-family='"Liberation Sans", sans-serif' font-size="8.1" fill="#141414" stroke="#141414" stroke-width="0.2">15</text>
<text x="462.51" y="418.84" font-family='"Liberation Sans", sans-serif' font-size="6.7" fill="#1e1e22" textLength="27.24" lengthAdjust="spacingAndGlyphs" stroke="#1e1e22" stroke-width="0.15">P3.5/T1</text>
<line x1="494.35" y1="425.82" x2="513.28" y2="425.82" stroke="#7e0e14" stroke-width="1.5" />
<rect x="498.35" y="419.12" width="4.50" height="4.50" fill="#e23a3a" />
<text x="503.35" y="424.32" font-family='"Liberation Sans", sans-serif' font-size="8.1" fill="#141414" stroke="#141414" stroke-width="0.2">16</text>
<text x="458.62" y="428.32" font-family='"Liberation Sans", sans-serif' font-size="6.7" fill="#1e1e22" textLength="31.13" lengthAdjust="spacingAndGlyphs" stroke="#1e1e22" stroke-width="0.15">P3.6/WR</text>
<line x1="476.79" y1="422.62" x2="489.75" y2="422.62" stroke="#1e1e22" stroke-width="0.8" />
<line x1="494.35" y1="435.30" x2="513.28" y2="435.30" stroke="#7e0e14" stroke-width="1.5" />
<rect x="498.35" y="428.60" width="4.50" height="4.50" fill="#e23a3a" />
<text x="503.35" y="433.80" font-family='"Liberation Sans", sans-serif' font-size="8.1" fill="#141414" stroke="#141414" stroke-width="0.2">17</text>
<text x="460.35" y="437.80" font-family='"Liberation Sans", sans-serif' font-size="6.7" fill="#1e1e22" textLength="29.40" lengthAdjust="spacingAndGlyphs" stroke="#1e1e22" stroke-width="0.15">P3.7/RD</text>
<line x1="478.51" y1="432.10" x2="489.75" y2="432.10" stroke="#1e1e22" stroke-width="0.8" />
<rect x="664.68" y="188.82" width="18.93" height="85.32" fill="#c9c9a9" stroke="#840e14" stroke-width="1.6" />
<text x="663.48" y="186.62" font-family='"Liberation Sans", sans-serif' font-size="12.4" fill="#555555" textLength="21.40" lengthAdjust="spacingAndGlyphs" >RN1</text>
<text x="663.68" y="282.34" font-family='"Liberation Sans", sans-serif' font-size="6.5" fill="#101010" textLength="13.20" lengthAdjust="spacingAndGlyphs" stroke="#101010" stroke-width="0.25">RX8</text>
<text x="663.48" y="291.74" font-family='"Liberation Sans", sans-serif' font-size="6.8" fill="#a6a6a6" textLength="29.00" lengthAdjust="spacingAndGlyphs" >&lt;TEXT&gt;</text>
<line x1="645.76" y1="198.30" x2="664.68" y2="198.30" stroke="#7e0e14" stroke-width="1.5" />
<line x1="683.61" y1="198.30" x2="702.54" y2="198.30" stroke="#7e0e14" stroke-width="1.5" />
<rect x="656.58" y="191.50" width="4.50" height="4.50" fill="#3440e0" />
<rect x="687.21" y="191.50" width="4.50" height="4.50" fill="#3440e0" />
<text x="655.68" y="197.00" font-family='"Liberation Sans", sans-serif' font-size="8.1" fill="#141414" text-anchor="end" stroke="#141414" stroke-width="0.2">1</text>
<text x="692.21" y="197.00" font-family='"Liberation Sans", sans-serif' font-size="8.1" fill="#141414" stroke="#141414" stroke-width="0.2">16</text>
<line x1="645.76" y1="207.78" x2="664.68" y2="207.78" stroke="#7e0e14" stroke-width="1.5" />
<line x1="683.61" y1="207.78" x2="702.54" y2="207.78" stroke="#7e0e14" stroke-width="1.5" />
<rect x="656.58" y="200.98" width="4.50" height="4.50" fill="#3440e0" />
<rect x="687.21" y="200.98" width="4.50" height="4.50" fill="#3440e0" />
<text x="655.68" y="206.48" font-family='"Liberation Sans", sans-serif' font-size="8.1" fill="#141414" text-anchor="end" stroke="#141414" stroke-width="0.2">2</text>
<text x="692.21" y="206.48" font-family='"Liberation Sans", sans-serif' font-size="8.1" fill="#141414" stroke="#141414" stroke-width="0.2">15</text>
<line x1="645.76" y1="217.26" x2="664.68" y2="217.26" stroke="#7e0e14" stroke-width="1.5" />
<line x1="683.61" y1="217.26" x2="702.54" y2="217.26" stroke="#7e0e14" stroke-width="1.5" />
<rect x="656.58" y="210.46" width="4.50" height="4.50" fill="#3440e0" />
<rect x="687.21" y="210.46" width="4.50" height="4.50" fill="#3440e0" />
<text x="655.68" y="215.96" font-family='"Liberation Sans", sans-serif' font-size="8.1" fill="#141414" text-anchor="end" stroke="#141414" stroke-width="0.2">3</text>
<text x="692.21" y="215.96" font-family='"Liberation Sans", sans-serif' font-size="8.1" fill="#141414" stroke="#141414" stroke-width="0.2">14</text>
<line x1="645.76" y1="226.74" x2="664.68" y2="226.74" stroke="#7e0e14" stroke-width="1.5" />
<line x1="683.61" y1="226.74" x2="702.54" y2="226.74" stroke="#7e0e14" stroke-width="1.5" />
<rect x="656.58" y="219.94" width="4.50" height="4.50" fill="#3440e0" />
<rect x="687.21" y="219.94" width="4.50" height="4.50" fill="#3440e0" />
<text x="655.68" y="225.44" font-family='"Liberation Sans", sans-serif' font-size="8.1" fill="#141414" text-anchor="end" stroke="#141414" stroke-width="0.2">4</text>
<text x="692.21" y="225.44" font-family='"Liberation Sans", sans-serif' font-size="8.1" fill="#141414" stroke="#141414" stroke-width="0.2">13</text>
<line x1="645.76" y1="236.22" x2="664.68" y2="236.22" stroke="#7e0e14" stroke-width="1.5" />
<line x1="683.61" y1="236.22" x2="702.54" y2="236.22" stroke="#7e0e14" stroke-width="1.5" />
<rect x="656.58" y="229.42" width="4.50" height="4.50" fill="#e23a3a" />
<rect x="687.21" y="229.42" width="4.50" height="4.50" fill="#e23a3a" />
<text x="655.68" y="234.92" font-family='"Liberation Sans", sans-serif' font-size="8.1" fill="#141414" text-anchor="end" stroke="#141414" stroke-width="0.2">5</text>
<text x="692.21" y="234.92" font-family='"Liberation Sans", sans-serif' font-size="8.1" fill="#141414" stroke="#141414" stroke-width="0.2">12</text>
<line x1="645.76" y1="245.70" x2="664.68" y2="245.70" stroke="#7e0e14" stroke-width="1.5" />
<line x1="683.61" y1="245.70" x2="702.54" y2="245.70" stroke="#7e0e14" stroke-width="1.5" />
<rect x="656.58" y="238.90" width="4.50" height="4.50" fill="#e23a3a" />
<rect x="687.21" y="238.90" width="4.50" height="4.50" fill="#e23a3a" />
<text x="655.68" y="244.40" font-family='"Liberation Sans", sans-serif' font-size="8.1" fill="#141414" text-anchor="end" stroke="#141414" stroke-width="0.2">6</text>
<text x="692.21" y="244.40" font-family='"Liberation Sans", sans-serif' font-size="8.1" fill="#141414" stroke="#141414" stroke-width="0.2">11</text>
<line x1="645.76" y1="255.18" x2="664.68" y2="255.18" stroke="#7e0e14" stroke-width="1.5" />
<line x1="683.61" y1="255.18" x2="702.54" y2="255.18" stroke="#7e0e14" stroke-width="1.5" />
<rect x="656.58" y="248.38" width="4.50" height="4.50" fill="#3440e0" />
<rect x="687.21" y="248.38" width="4.50" height="4.50" fill="#3440e0" />
<text x="655.68" y="253.88" font-family='"Liberation Sans", sans-serif' font-size="8.1" fill="#141414" text-anchor="end" stroke="#141414" stroke-width="0.2">7</text>
<text x="692.21" y="253.88" font-family='"Liberation Sans", sans-serif' font-size="8.1" fill="#141414" stroke="#141414" stroke-width="0.2">10</text>
<line x1="645.76" y1="264.66" x2="664.68" y2="264.66" stroke="#7e0e14" stroke-width="1.5" />
<line x1="683.61" y1="264.66" x2="702.54" y2="264.66" stroke="#7e0e14" stroke-width="1.5" />
<text x="654.08" y="263.36" font-family='"Liberation Sans", sans-serif' font-size="8.1" fill="#141414" text-anchor="end" stroke="#141414" stroke-width="0.2">8</text>
<text x="691.81" y="263.36" font-family='"Liberation Sans", sans-serif' font-size="8.1" fill="#141414" stroke="#141414" stroke-width="0.2">9</text>
<rect x="759.31" y="64.00" width="141.95" height="105.86" fill="#7f8080" stroke="#840e14" stroke-width="1.6" />
<rect x="768.00" y="64.00" width="125.20" height="92.40" fill="#4a0202" />
<line x1="830.60" y1="68.00" x2="830.60" y2="156.40" stroke="#5e1010" stroke-width="1.2" />
<path d="M786.62 114.40 L785.17 139.80 M788.42 82.80 L786.97 108.20" fill="none" stroke="#560505" stroke-width="6.6" stroke-linecap="round"/>
<path d="M789.00 79.60 H814.70 M817.72 82.80 L816.27 108.20 M815.92 114.40 L814.47 139.80 M785.40 142.80 H811.10 M787.20 111.20 H812.90" fill="none" stroke="#a00404" stroke-opacity="0.55" stroke-width="8.8" stroke-linecap="round"/>
<path d="M789.00 79.60 H814.70 M817.72 82.80 L816.27 108.20 M815.92 114.40 L814.47 139.80 M785.40 142.80 H811.10 M787.20 111.20 H812.90" fill="none" stroke="#ff0c0c" stroke-width="6.6" stroke-linecap="round"/>
<circle cx="822.30" cy="145.80" r="1.9" fill="#7c1212"/>
<path d="M851.20 79.60 H876.90 M879.92 82.80 L878.47 108.20 M878.12 114.40 L876.67 139.80 M847.60 142.80 H873.30 M848.82 114.40 L847.37 139.80 M850.62 82.80 L849.17 108.20 M849.40 111.20 H875.10" fill="none" stroke="#5e0808" stroke-width="6.6" stroke-linecap="round"/>
<circle cx="884.50" cy="145.80" r="1.9" fill="#7c1212"/>
<text x="770.40" y="165.90" font-family='"Liberation Sans", sans-serif' font-size="9.3" fill="#101010" font-weight="bold" textLength="52.00" lengthAdjust="spacingAndGlyphs" >ABCDEFG</text>
<text x="831.00" y="165.90" font-family='"Liberation Sans", sans-serif' font-size="9.3" fill="#101010" font-weight="bold" textLength="13.80" lengthAdjust="spacingAndGlyphs" >DP</text>
<text x="870.80" y="165.90" font-family='"Liberation Sans", sans-serif' font-size="9.3" fill="#101010" font-weight="bold" textLength="12.80" lengthAdjust="spacingAndGlyphs" >12</text>
<line x1="768.78" y1="169.86" x2="768.78" y2="179.34" stroke="#4a0c10" stroke-width="1.5" />
<rect x="761.68" y="176.74" width="4.90" height="4.90" fill="#3440e0" />
<line x1="778.24" y1="169.86" x2="778.24" y2="179.34" stroke="#4a0c10" stroke-width="1.5" />
<rect x="771.14" y="176.74" width="4.90" height="4.90" fill="#3440e0" />
<line x1="787.70" y1="169.86" x2="787.70" y2="179.34" stroke="#4a0c10" stroke-width="1.5" />
<rect x="780.60" y="176.74" width="4.90" height="4.90" fill="#3440e0" />
<line x1="797.17" y1="169.86" x2="797.17" y2="179.34" stroke="#4a0c10" stroke-width="1.5" />
<rect x="790.07" y="176.74" width="4.90" height="4.90" fill="#3440e0" />
<line x1="806.63" y1="169.86" x2="806.63" y2="179.34" stroke="#4a0c10" stroke-width="1.5" />
<rect x="799.53" y="176.74" width="4.90" height="4.90" fill="#e23a3a" />
<line x1="816.09" y1="169.86" x2="816.09" y2="179.34" stroke="#4a0c10" stroke-width="1.5" />
<rect x="808.99" y="176.74" width="4.90" height="4.90" fill="#e23a3a" />
<line x1="825.56" y1="169.86" x2="825.56" y2="179.34" stroke="#4a0c10" stroke-width="1.5" />
<rect x="818.46" y="176.74" width="4.90" height="4.90" fill="#3440e0" />
<line x1="835.02" y1="169.86" x2="835.02" y2="179.34" stroke="#4a0c10" stroke-width="1.5" />
<rect x="827.92" y="176.74" width="4.90" height="4.90" fill="#8a8a8a" />
<line x1="872.87" y1="169.86" x2="872.87" y2="179.34" stroke="#4a0c10" stroke-width="1.5" />
<rect x="865.77" y="176.74" width="4.90" height="4.90" fill="#e23a3a" />
<line x1="882.33" y1="169.86" x2="882.33" y2="179.34" stroke="#4a0c10" stroke-width="1.5" />
<rect x="875.23" y="176.74" width="4.90" height="4.90" fill="#3440e0" />
<path d="M513.28 198.30 L645.76 198.30" fill="none" stroke="#0e300f" stroke-width="1.9" stroke-linejoin="miter"/>
<path d="M702.54 198.30 L768.78 198.30 L768.78 179.34" fill="none" stroke="#0e300f" stroke-width="1.9" stroke-linejoin="miter"/>
<path d="M513.28 207.78 L645.76 207.78" fill="none" stroke="#0e300f" stroke-width="1.9" stroke-linejoin="miter"/>
<path d="M702.54 207.78 L778.24 207.78 L778.24 179.34" fill="none" stroke="#0e300f" stroke-width="1.9" stroke-linejoin="miter"/>
<path d="M513.28 217.26 L645.76 217.26" fill="none" stroke="#0e300f" stroke-width="1.9" stroke-linejoin="miter"/>
<path d="M702.54 217.26 L787.70 217.26 L787.70 179.34" fill="none" stroke="#0e300f" stroke-width="1.9" stroke-linejoin="miter"/>
<path d="M513.28 226.74 L645.76 226.74" fill="none" stroke="#0e300f" stroke-width="1.9" stroke-linejoin="miter"/>
<path d="M702.54 226.74 L797.17 226.74 L797.17 179.34" fill="none" stroke="#0e300f" stroke-width="1.9" stroke-linejoin="miter"/>
<path d="M513.28 236.22 L645.76 236.22" fill="none" stroke="#0e300f" stroke-width="1.9" stroke-linejoin="miter"/>
<path d="M702.54 236.22 L806.63 236.22 L806.63 179.34" fill="none" stroke="#0e300f" stroke-width="1.9" stroke-linejoin="miter"/>
<path d="M513.28 245.70 L645.76 245.70" fill="none" stroke="#0e300f" stroke-width="1.9" stroke-linejoin="miter"/>
<path d="M702.54 245.70 L816.09 245.70 L816.09 179.34" fill="none" stroke="#0e300f" stroke-width="1.9" stroke-linejoin="miter"/>
<path d="M513.28 255.18 L645.76 255.18" fill="none" stroke="#0e300f" stroke-width="1.9" stroke-linejoin="miter"/>
<path d="M702.54 255.18 L825.56 255.18 L825.56 179.34" fill="none" stroke="#0e300f" stroke-width="1.9" stroke-linejoin="miter"/>
<path d="M513.28 302.58 L872.87 302.58 L872.87 179.34" fill="none" stroke="#0e300f" stroke-width="1.9" stroke-linejoin="miter"/>
<path d="M513.28 312.06 L882.33 312.06 L882.33 179.34" fill="none" stroke="#0e300f" stroke-width="1.9" stroke-linejoin="miter"/>
<path d="M513.28 406.86 L607.91 406.86" fill="none" stroke="#0e300f" stroke-width="1.9" stroke-linejoin="miter"/>
<circle cx="560.59" cy="406.86" r="2.4" fill="#0e300f"/>
<line x1="607.91" y1="406.86" x2="617.37" y2="406.86" stroke="#7e0e14" stroke-width="1.5" />
<line x1="645.76" y1="406.86" x2="656.72" y2="406.86" stroke="#7e0e14" stroke-width="1.5" />
<rect x="617.37" y="403.26" width="28.39" height="7.60" fill="#c9c9a9" stroke="#840e14" stroke-width="1.5" />
<rect x="606.00" y="399.96" width="4.50" height="4.50" fill="#e23a3a" />
<rect x="653.40" y="399.96" width="4.50" height="4.50" fill="#e23a3a" />
<text x="616.00" y="400.26" font-family='"Liberation Sans", sans-serif' font-size="12.0" fill="#5a5a5a" textLength="13.60" lengthAdjust="spacingAndGlyphs" >R1</text>
<text x="616.60" y="427.60" font-family='"Liberation Sans", sans-serif' font-size="6.8" fill="#a6a6a6" textLength="29.00" lengthAdjust="spacingAndGlyphs" >&lt;TEXT&gt;</text>
<text x="617.20" y="438.00" font-family='"Liberation Sans", sans-serif' font-size="7.0" fill="#0a0a0a" font-weight="bold" textLength="10.80" lengthAdjust="spacingAndGlyphs" >10k</text>
<path d="M656.72 406.86 L683.61 406.86 L683.61 368.94" fill="none" stroke="#0e300f" stroke-width="1.9" stroke-linejoin="miter"/>
<path d="M678.91 368.94 L683.61 360.74 L688.31 368.94 Z" fill="#e0e1d1" stroke="#0e300f" stroke-width="1.3"/>
<path d="M560.59 406.86 L560.59 444.78 L570.05 444.78" fill="none" stroke="#0e300f" stroke-width="1.9" stroke-linejoin="miter"/>
<line x1="570.05" y1="444.78" x2="575.40" y2="444.78" stroke="#7e0e14" stroke-width="1.5" />
<circle cx="577.7" cy="444.78" r="2.2" fill="#e0e1d1" stroke="#840e14" stroke-width="1.2"/>
<circle cx="600.3" cy="444.78" r="2.2" fill="#e0e1d1" stroke="#840e14" stroke-width="1.2"/>
<line x1="602.60" y1="444.78" x2="607.91" y2="444.78" stroke="#7e0e14" stroke-width="1.5" />
<line x1="576.20" y1="437.20" x2="601.80" y2="437.20" stroke="#840e14" stroke-width="1.4" />
<rect x="581.20" y="432.80" width="15.60" height="4.40" fill="#c9c9a9" stroke="#840e14" stroke-width="1.2" />
<rect x="563.00" y="437.60" width="4.50" height="4.50" fill="#e23a3a" />
<rect x="610.40" y="437.80" width="4.50" height="4.50" fill="#3440e0" />
<circle cx="608.2" cy="435.0" r="3.3" fill="#8a0c10"/><circle cx="608.2" cy="435.0" r="0.9" fill="#d04040"/>
<path d="M607.91 444.78 L617.37 444.78 L617.37 473.22" fill="none" stroke="#0e300f" stroke-width="1.9" stroke-linejoin="miter"/>
<line x1="608.17" y1="473.22" x2="626.57" y2="473.22" stroke="#0e300f" stroke-width="1.4" />
<line x1="612.37" y1="477.62" x2="622.37" y2="477.62" stroke="#0e300f" stroke-width="1.3" />
<line x1="616.17" y1="482.02" x2="618.57" y2="482.02" stroke="#0e300f" stroke-width="1.3" />
<circle cx="712.00" cy="360.00" r="2.8" fill="none" stroke="#2838c8" stroke-width="1.1"/><path d="M706.80 360.00 H717.20 M712.00 354.80 V365.20" stroke="#2838c8" stroke-width="1"/>
</g>
<line x1="150.00" y1="68.50" x2="1010.00" y2="68.50" stroke="#55534a" stroke-width="1.1" />
<line x1="150.50" y1="68.00" x2="150.50" y2="524.60" stroke="#55534a" stroke-width="1.1" />
<line x1="150.00" y1="524.50" x2="1010.00" y2="524.50" stroke="#5e5c50" stroke-width="1.1" />
<line x1="1009.50" y1="68.00" x2="1009.50" y2="525.00" stroke="#55534a" stroke-width="1.1" />
<line x1="150.00" y1="525.60" x2="1011.00" y2="525.60" stroke="#fbfaf4" stroke-width="1.0" />
<line x1="1010.60" y1="68.00" x2="1010.60" y2="525.60" stroke="#ffffff" stroke-width="1.2" />
<rect x="19.20" y="530.20" width="29.20" height="12.20" fill="#eeece0" stroke="#3e3c34" stroke-width="1.1" />
<line x1="20.20" y1="531.20" x2="47.40" y2="531.20" stroke="#ffffff" stroke-width="1" />
<line x1="20.20" y1="531.20" x2="20.20" y2="541.60" stroke="#ffffff" stroke-width="1" />
<line x1="20.40" y1="541.40" x2="47.40" y2="541.40" stroke="#b8b4a2" stroke-width="1" />
<line x1="47.20" y1="531.40" x2="47.20" y2="541.60" stroke="#b8b4a2" stroke-width="1" />
<rect x="48.40" y="530.20" width="29.20" height="12.20" fill="#eeece0" stroke="#3e3c34" stroke-width="1.1" />
<line x1="49.40" y1="531.20" x2="76.60" y2="531.20" stroke="#ffffff" stroke-width="1" />
<line x1="49.40" y1="531.20" x2="49.40" y2="541.60" stroke="#ffffff" stroke-width="1" />
<line x1="49.60" y1="541.40" x2="76.60" y2="541.40" stroke="#b8b4a2" stroke-width="1" />
<line x1="76.40" y1="531.40" x2="76.40" y2="541.60" stroke="#b8b4a2" stroke-width="1" />
<rect x="77.60" y="530.20" width="29.60" height="12.20" fill="#eeece0" stroke="#3e3c34" stroke-width="1.1" />
<line x1="78.60" y1="531.20" x2="106.20" y2="531.20" stroke="#ffffff" stroke-width="1" />
<line x1="78.60" y1="531.20" x2="78.60" y2="541.60" stroke="#ffffff" stroke-width="1" />
<line x1="78.80" y1="541.40" x2="106.20" y2="541.40" stroke="#b8b4a2" stroke-width="1" />
<line x1="106.00" y1="531.40" x2="106.00" y2="541.60" stroke="#b8b4a2" stroke-width="1" />
<rect x="107.20" y="530.20" width="29.40" height="12.20" fill="#eeece0" stroke="#3e3c34" stroke-width="1.1" />
<line x1="108.20" y1="531.20" x2="135.60" y2="531.20" stroke="#ffffff" stroke-width="1" />
<line x1="108.20" y1="531.20" x2="108.20" y2="541.60" stroke="#ffffff" stroke-width="1" />
<line x1="108.40" y1="541.40" x2="135.60" y2="541.40" stroke="#b8b4a2" stroke-width="1" />
<line x1="135.40" y1="531.40" x2="135.40" y2="541.60" stroke="#b8b4a2" stroke-width="1" />
<path d="M30.8 532.6 L37.2 536.4 L30.8 540.2 Z" fill="#1f8a24"/>
<path d="M59.6 532.6 v7.6" stroke="#141414" stroke-width="1.9"/><path d="M62 532.6 L68 536.4 L62 540.2 Z" fill="#141414"/>
<path d="M90.2 532.6 v7.8 M94.6 532.6 v7.8" stroke="#141414" stroke-width="2"/>
<rect x="118.40" y="533.00" width="7.20" height="7.00" fill="#141414" />
<line x1="140.40" y1="529.60" x2="215.60" y2="529.60" stroke="#aca899" stroke-width="1" />
<line x1="140.40" y1="529.60" x2="140.40" y2="543.00" stroke="#aca899" stroke-width="1" />
<line x1="140.40" y1="543.00" x2="215.60" y2="543.00" stroke="#ffffff" stroke-width="1" />
<line x1="215.60" y1="529.60" x2="215.60" y2="543.00" stroke="#ffffff" stroke-width="1" />
<path d="M149.2 531.6 L154.2 540.8 H144.2 Z" fill="#f4d41c" stroke="#a88c10" stroke-width="0.7"/><path d="M149.2 534.2 v3.4" stroke="#141414" stroke-width="1.2"/><circle cx="149.2" cy="539.2" r="0.7" fill="#141414"/>
<text x="159.20" y="539.80" font-family='"Liberation Sans", sans-serif' font-size="8.2" fill="#141414" textLength="52.40" lengthAdjust="spacingAndGlyphs" >29 Message(s)</text>
<line x1="223.40" y1="529.60" x2="911.40" y2="529.60" stroke="#aca899" stroke-width="1" />
<line x1="223.40" y1="529.60" x2="223.40" y2="543.00" stroke="#aca899" stroke-width="1" />
<line x1="223.40" y1="543.00" x2="911.40" y2="543.00" stroke="#ffffff" stroke-width="1" />
<line x1="911.40" y1="529.60" x2="911.40" y2="543.00" stroke="#ffffff" stroke-width="1" />
<text x="228.20" y="539.80" font-family='"Liberation Sans", sans-serif' font-size="8.2" fill="#26402a" textLength="165.20" lengthAdjust="spacingAndGlyphs" >ANIMATING: 00:00:11.600000 (CPU load 6%)</text>
<line x1="914.80" y1="529.60" x2="1008.80" y2="529.60" stroke="#aca899" stroke-width="1" />
<line x1="914.80" y1="529.60" x2="914.80" y2="543.00" stroke="#aca899" stroke-width="1" />
<line x1="914.80" y1="543.00" x2="1008.80" y2="543.00" stroke="#ffffff" stroke-width="1" />
<line x1="1008.80" y1="529.60" x2="1008.80" y2="543.00" stroke="#ffffff" stroke-width="1" />
<text x="924.40" y="539.80" font-family='"Liberation Sans", sans-serif' font-size="8.2" fill="#141414" textLength="27.00" lengthAdjust="spacingAndGlyphs" >-1500.0</text>
<text x="959.40" y="539.80" font-family='"Liberation Sans", sans-serif' font-size="8.2" fill="#141414" textLength="29.00" lengthAdjust="spacingAndGlyphs" >+1500.0</text>
<text x="1000.60" y="539.80" font-family='"Liberation Sans", sans-serif' font-size="8.2" fill="#2a2a8a" textLength="7.40" lengthAdjust="spacingAndGlyphs" >th</text>
<rect x="-12.00" y="555.20" width="1048.00" height="22.80" fill="url(#gTask)" />
<rect x="-12.00" y="577.50" width="1048.00" height="13.00" fill="#1c46b4" />
<path d="M-12 555.2 H62 Q72 557.2 72.4 566.6 Q72 575.2 62 578 H-12 Z" fill="url(#gStart)"/>
<rect x="-12.00" y="577.50" width="74.00" height="13.00" fill="#2c7430" />
<path d="M0 555.8000000000001 H62 Q70 557.2  71.6 563.2" fill="none" stroke="#7cc47c" stroke-width="1"/>
<g transform="translate(15.6,566.6)"><path d="M-4.6 -5 Q-2.4 -6.2 -0.4 -5 L-1.2 -0.6 Q-3.2 -1.8 -5.4 -0.6 Z" fill="#e8542c"/><path d="M0.6 -4.8 Q2.6 -3.6 4.8 -4.8 L4 -0.4 Q1.8 0.8 -0.2 -0.4 Z" fill="#6cc04c"/><path d="M-5.6 0.6 Q-3.4 -0.6 -1.4 0.6 L-2.2 5 Q-4.2 3.8 -6.4 5 Z" fill="#3c8cf0"/><path d="M-0.4 0.8 Q1.6 2 3.8 0.8 L3 5.2 Q0.8 6.4 -1.2 5.2 Z" fill="#f4cc2c"/></g>
<text x="26.80" y="571.80" font-family='"Liberation Sans", sans-serif' font-size="13.2" fill="#1c4a1c" font-weight="bold" font-style="italic" textLength="30.60" lengthAdjust="spacingAndGlyphs" >start</text>
<text x="26.20" y="571.20" font-family='"Liberation Sans", sans-serif' font-size="13.2" fill="#ffffff" font-weight="bold" font-style="italic" textLength="30.60" lengthAdjust="spacingAndGlyphs" >start</text>
<g transform="translate(86.4,566.4)"><rect x="-4.4" y="-4.6" width="8.8" height="9.4" rx="1.6" fill="#e4ecf8" stroke="#4a6cb0" stroke-width="0.8"/><path d="M2 -2.6 Q-2.6 -3 -2.4 0.4 Q-2.2 3 2 2.6 M-0.4 -1 h2.4 M-0.4 1 h2.4" fill="none" stroke="#3c5ca8" stroke-width="1.1"/></g>
<g transform="translate(104.4,566.4)"><circle r="4.2" fill="none" stroke="#5cb8f4" stroke-width="2.1"/><path d="M-3 0.2 h6.4" stroke="#5cb8f4" stroke-width="1.6"/><path d="M-6 3 Q0 -7 6 -4.4" fill="none" stroke="#f0d468" stroke-width="1.2"/></g>
<g transform="translate(122.6,566.4)"><circle r="5" fill="#e44c34"/><path d="M0 0 L-4.4 2.4 A5 5 0 0 0 2.2 4.5 Z" fill="#4cac4c"/><path d="M0 0 L2.2 4.5 A5 5 0 0 0 4.8 -1.4 Z" fill="#f4cc34"/><circle r="2.2" fill="#4c8cf0" stroke="#fff" stroke-width="0.8"/></g>
<g transform="translate(140.6,566.4)"><rect x="-4.6" y="-4.8" width="9.2" height="9.8" rx="2.6" fill="#f0f4fc" stroke="#c4d0e8" stroke-width="0.8"/><circle r="2.7" fill="#2c58b4"/><path d="M-0.8 -1.4 L1.6 0 L-0.8 1.4 Z" fill="#fff"/></g>
<rect x="192.20" y="557.40" width="73.60" height="19.20" fill="url(#gTbtn)" stroke="#2c5cc8" stroke-width="0.8" rx="2"/>
<line x1="193.70" y1="558.20" x2="264.20" y2="558.20" stroke="#7cacf8" stroke-width="0.9" />
<g transform="translate(202.80,567.00)">
<rect x="-5" y="-4" width="4.4" height="7.6" fill="#3cac4c"/><rect x="0.4" y="-4.4" width="4.6" height="8" fill="#e4443c"/><path d="M-3 -1 l5 2" stroke="#f4f4f4" stroke-width="1.4"/>
</g>
<text x="213.00" y="570.20" font-family='"Liberation Sans", sans-serif' font-size="8.4" fill="#ffffff" textLength="39.40" lengthAdjust="spacingAndGlyphs" >CSM Clie...</text>
<rect x="267.48" y="557.40" width="73.60" height="19.20" fill="url(#gTbtn)" stroke="#2c5cc8" stroke-width="0.8" rx="2"/>
<line x1="268.98" y1="558.20" x2="339.48" y2="558.20" stroke="#7cacf8" stroke-width="0.9" />
<g transform="translate(278.08,567.00)">
<circle r="5.2" fill="#e8801c"/><circle cx="0.6" cy="0.4" r="3" fill="#3c4cb4"/><path d="M-4.6 -2.2 Q-2 -5.6 2.8 -4.2 Q-1 -3.2 -1.6 0.6 Q-3.2 2.6 -4.6 -2.2 Z" fill="#f4b02c"/>
</g>
<text x="288.28" y="570.20" font-family='"Liberation Sans", sans-serif' font-size="8.4" fill="#ffffff" textLength="37.60" lengthAdjust="spacingAndGlyphs" >Vi điều k...</text>
<rect x="342.76" y="557.40" width="73.60" height="19.20" fill="url(#gTbtn)" stroke="#2c5cc8" stroke-width="0.8" rx="2"/>
<line x1="344.26" y1="558.20" x2="414.76" y2="558.20" stroke="#7cacf8" stroke-width="0.9" />
<g transform="translate(353.36,567.00)">
<path d="M-5 -3.6 L5 3.6 M-5 3.6 L5 -3.6 M-5.4 0 H5.4" stroke="#b8c4dc" stroke-width="1.3"/><circle r="1.8" fill="#dfe6f4"/>
</g>
<text x="363.56" y="570.20" font-family='"Liberation Sans", sans-serif' font-size="8.4" fill="#ffffff" textLength="41.40" lengthAdjust="spacingAndGlyphs" >New Proj...</text>
<rect x="418.04" y="557.40" width="73.60" height="19.20" fill="url(#gTbtn)" stroke="#2c5cc8" stroke-width="0.8" rx="2"/>
<line x1="419.54" y1="558.20" x2="490.04" y2="558.20" stroke="#7cacf8" stroke-width="0.9" />
<g transform="translate(428.64,567.00)">
<rect x="-5.6" y="-5.4" width="11.2" height="10.8" fill="#1c2c8c" stroke="#e8ecf8" stroke-width="0.9"/><path d="M-3.6 -3.4 L-1.6 1.6 L0 -1.6 L1.4 1.6 L3.6 -3.4" fill="none" stroke="#fff" stroke-width="1.2"/><rect x="-3.6" y="2.2" width="3" height="2" fill="#f4cc2c"/><rect x="1" y="2.2" width="3" height="2" fill="#e4443c"/>
</g>
<text x="438.84" y="570.20" font-family='"Liberation Sans", sans-serif' font-size="8.4" fill="#ffffff" textLength="40.00" lengthAdjust="spacingAndGlyphs" >laptrinh  ...</text>
<rect x="493.32" y="557.40" width="73.60" height="19.20" fill="url(#gTbtn)" stroke="#2c5cc8" stroke-width="0.8" rx="2"/>
<line x1="494.82" y1="558.20" x2="565.32" y2="558.20" stroke="#7cacf8" stroke-width="0.9" />
<g transform="translate(503.92,567.00)">
<path d="M-5.6 4 V-3.8 H-2.4 L-1.2 -2.4 H4.6 V4 Z" fill="#e8c84c" stroke="#b8942c" stroke-width="0.7"/><path d="M-5.6 4 L-3.6 -0.6 H6 L4.6 4 Z" fill="#f8e88c" stroke="#c8a43c" stroke-width="0.7"/>
</g>
<text x="514.12" y="570.20" font-family='"Liberation Sans", sans-serif' font-size="8.4" fill="#ffffff" textLength="13.20" lengthAdjust="spacingAndGlyphs" >BIN</text>
<rect x="568.60" y="557.40" width="73.60" height="19.20" fill="url(#gTbtn)" stroke="#2c5cc8" stroke-width="0.8" rx="2"/>
<line x1="570.10" y1="558.20" x2="640.60" y2="558.20" stroke="#7cacf8" stroke-width="0.9" />
<g transform="translate(579.20,567.00)">
<path d="M-5.6 4 V-3.8 H-2.4 L-1.2 -2.4 H4.6 V4 Z" fill="#e8c84c" stroke="#b8942c" stroke-width="0.7"/><path d="M-5.6 4 L-3.6 -0.6 H6 L4.6 4 Z" fill="#f8e88c" stroke="#c8a43c" stroke-width="0.7"/>
</g>
<text x="589.40" y="570.20" font-family='"Liberation Sans", sans-serif' font-size="8.4" fill="#ffffff" textLength="39.60" lengthAdjust="spacingAndGlyphs" >PROTEU...</text>
<rect x="643.88" y="557.40" width="73.60" height="19.20" fill="#1c48b0" stroke="#14388c" stroke-width="0.9" rx="2"/>
<g transform="translate(654.48,567.00)">
<rect x="-6" y="-4.2" width="12" height="8.6" fill="#0c18a8" stroke="#2c3cc8" stroke-width="0.6"/>
<text x="0.00" y="2.60" font-family='"Liberation Sans", sans-serif' font-size="6.6" fill="#fff" text-anchor="middle" font-weight="bold" textLength="10.20" lengthAdjust="spacingAndGlyphs" >ISIS</text>
</g>
<text x="664.68" y="570.20" font-family='"Liberation Sans", sans-serif' font-size="8.4" fill="#ffffff" textLength="39.00" lengthAdjust="spacingAndGlyphs" >UNTITLE...</text>
<rect x="719.16" y="557.40" width="73.60" height="19.20" fill="url(#gTbtn)" stroke="#2c5cc8" stroke-width="0.8" rx="2"/>
<line x1="720.66" y1="558.20" x2="791.16" y2="558.20" stroke="#7cacf8" stroke-width="0.9" />
<g transform="translate(729.76,567.00)">
<rect x="-4" y="-5.6" width="8" height="11.2" rx="0.8" fill="#d4dcec" stroke="#8c98b4" stroke-width="0.8"/><rect x="-2.8" y="-4.4" width="5.6" height="2.6" fill="#f4f8fc"/><path d="M-2.6 0 h5.2 M-2.6 2 h5.2 M-2.6 3.8 h5.2" stroke="#7c88a8" stroke-width="1" stroke-dasharray="1.2 0.8"/>
</g>
<text x="739.96" y="570.20" font-family='"Liberation Sans", sans-serif' font-size="8.4" fill="#ffffff" textLength="38.60" lengthAdjust="spacingAndGlyphs" >Calculator</text>
<rect x="794.44" y="557.40" width="73.60" height="19.20" fill="url(#gTbtn)" stroke="#2c5cc8" stroke-width="0.8" rx="2"/>
<line x1="795.94" y1="558.20" x2="866.44" y2="558.20" stroke="#7cacf8" stroke-width="0.9" />
<g transform="translate(805.04,567.00)">
<circle r="5.2" fill="#e8801c"/><circle cx="0.6" cy="0.4" r="3" fill="#3c4cb4"/><path d="M-4.6 -2.2 Q-2 -5.6 2.8 -4.2 Q-1 -3.2 -1.6 0.6 Q-3.2 2.6 -4.6 -2.2 Z" fill="#f4b02c"/>
</g>
<text x="815.24" y="570.20" font-family='"Liberation Sans", sans-serif' font-size="8.4" fill="#ffffff" textLength="37.40" lengthAdjust="spacingAndGlyphs" >Tải file t...</text>
<rect x="869.72" y="557.40" width="73.60" height="19.20" fill="url(#gTbtn)" stroke="#2c5cc8" stroke-width="0.8" rx="2"/>
<line x1="871.22" y1="558.20" x2="941.72" y2="558.20" stroke="#7cacf8" stroke-width="0.9" />
<g transform="translate(880.32,567.00)">
<path d="M-3.4 -5.4 H4.4 V5 H-4.4 V-4.4 Z" fill="#cfe8f4" stroke="#5c9cc4" stroke-width="0.8"/><path d="M-2.4 -2.6 h5 M-2.4 -0.6 h5 M-2.4 1.4 h3.4" stroke="#4c8cb4" stroke-width="0.8"/><path d="M-4.4 -5.4 h8.8" stroke="#3c7cac" stroke-width="1.6"/>
</g>
<text x="890.52" y="570.20" font-family='"Liberation Sans", sans-serif' font-size="8.4" fill="#ffffff" textLength="38.60" lengthAdjust="spacingAndGlyphs" >It - Note...</text>
<path d="M955 555.2 H1036 V578 H955 Z" fill="url(#gTray)"/>
<rect x="955.00" y="577.50" width="81.00" height="13.00" fill="#1078c8" />
<line x1="955.40" y1="555.20" x2="955.40" y2="578.00" stroke="#0c4c9c" stroke-width="1.2" />
<line x1="956.60" y1="555.20" x2="956.60" y2="578.00" stroke="#5cc0f8" stroke-width="0.8" />
<g transform="translate(954.6,566.6)"><circle r="5.4" fill="#3c94ec" stroke="#8cc8f8" stroke-width="1"/><path d="M1.4 -2.8 L-1.4 0 L1.4 2.8" fill="none" stroke="#fff" stroke-width="1.5"/></g>
<rect x="962.20" y="560.80" width="10.80" height="11.20" fill="#f8ecec" stroke="#d4c4c4" stroke-width="0.7" />
<path d="M964 563 L967.6 570 L971.2 563" fill="none" stroke="#d81c24" stroke-width="1.9"/>
<g transform="translate(980.6,566.4)"><circle r="4.6" fill="#3c8c3c"/><path d="M-3.6 -1.6 Q0 -4.4 3.6 -1.8 M-4.2 1.4 Q0 3.6 4.2 1.2" stroke="#9cdc7c" stroke-width="1.2" fill="none"/><path d="M-5.8 2.2 l3 -1.6 l0.4 3 Z" fill="#e8e8e8"/></g>
<text x="993.00" y="570.20" font-family='"Liberation Sans", sans-serif' font-size="8.4" fill="#ffffff" textLength="21.00" lengthAdjust="spacingAndGlyphs" >11:13</text>
</g>
</svg>
</body></html>
